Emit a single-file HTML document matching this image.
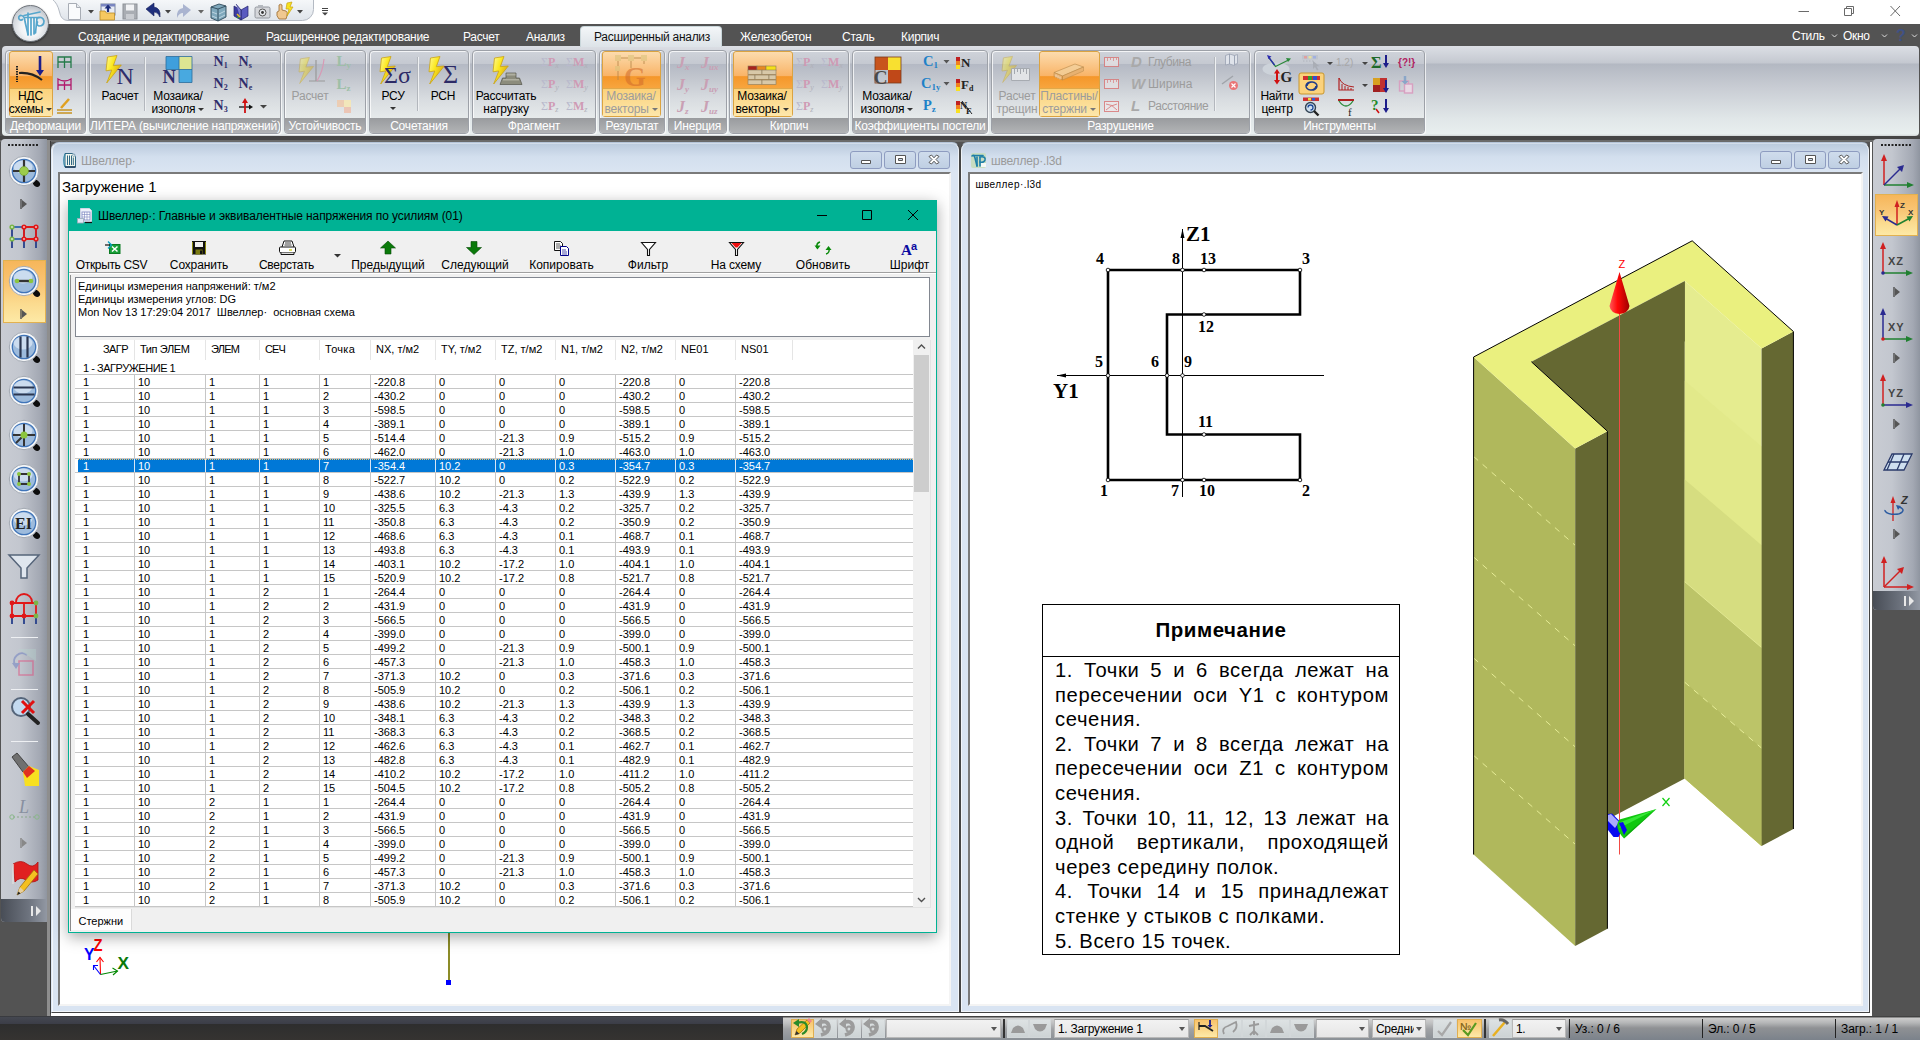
<!DOCTYPE html><html lang="ru"><head><meta charset="utf-8"><title>LIRA</title><style>
*{box-sizing:border-box}
html,body{margin:0;padding:0}
body{width:1920px;height:1040px;overflow:hidden;background:#535353;position:relative;font-family:"Liberation Sans",sans-serif;font-size:12px;color:#000}
.a{position:absolute}
.t{position:absolute;white-space:nowrap;line-height:1}
.tab{position:absolute;top:31px;color:#fff;font-size:12px;white-space:nowrap;line-height:1;letter-spacing:-.28px}
.grp{position:absolute;top:49.500px;height:84.500px;border:1px solid #9da1a8;border-radius:4px;background:linear-gradient(#cfd3da 0,#c5c9d1 12.500px,#b4b9c4 13px,#c1c5cd 26px,#d8dce0 48px,#e6eaeb 67px);overflow:hidden;box-shadow:inset 1px 1px 0 rgba(255,255,255,.75),1px 1px 0 rgba(255,255,255,.7)}
.grp .lb{position:absolute;left:0;right:0;bottom:0;height:15px;background:linear-gradient(#999b9e,#b2b4b6);color:#fff;font-size:12px;text-align:center;line-height:17px;white-space:nowrap;letter-spacing:-.2px;overflow:hidden}
.rl{position:absolute;font-size:12px;line-height:13px;text-align:center;white-space:nowrap;color:#000;letter-spacing:-.2px}
.dda{display:inline-block;width:0;height:0;border-left:3px solid transparent;border-right:3px solid transparent;border-top:3px solid #333;margin-left:3px;vertical-align:2px}
.dis{color:#9c9c9c}
.hot{position:absolute;border:1px solid #dba341;border-radius:3px;background:linear-gradient(#fcdcae 0,#f9b468 37%,#f5972a 38.500%,#f7a53e 56%,#f9c064 57%,#fde8a6 100%)}
.row{position:absolute;left:75px;width:838px;height:14px;border-top:1px solid #c6c6c6;font-size:11px;line-height:13px;white-space:nowrap}
.row span{position:absolute;top:.8px}
.vl{position:absolute;top:375px;width:1px;height:531px;background:#c6c6c6}
.hd{position:absolute;top:343px;font-size:11px;line-height:12px;white-space:nowrap}
.tbtn{position:absolute;top:258px;font-size:12px;line-height:14px;white-space:nowrap;text-align:center}
.sv{position:absolute;overflow:visible}
</style></head><body>
<!-- s_head -->
<div class="a" style="left:0;top:0;width:1920px;height:24px;background:#fff"></div><div class="a" style="left:0;top:24px;width:1920px;height:23px;background:#535353"></div><div class="a" style="left:0;top:46px;width:1920px;height:90px;background:#535353"></div><div class="a" style="left:2px;top:46px;width:1917px;height:90px;border-radius:4px;background:linear-gradient(#dcdfe5 0,#c4c8d0 17px,#b3b8c2 18px,#c9cdd4 42px,#e0e6e8 72px,#e8efef 88px,#d0d4d6 90px)"></div><div class="a" style="left:0;top:136px;width:1920px;height:4px;background:#454545"></div><div class="a" style="left:0;top:140px;width:1920px;height:2px;background:#6a6a6a"></div><svg class="sv" style="left:50px;top:0" width="270" height="24" viewBox="50 0 270 24"><linearGradient id="qg" x1="0" x2="0" y1="0" y2="1"><stop offset="0" stop-color="#f6f8fa"/><stop offset="1" stop-color="#dfe4ea"/></linearGradient><path d="M52 -1Q57.500 3 59.500 12Q61 20.500 68 20.500H302.500A11 11 0 0 0 313.500 9.500V-1Z" fill="url(#qg)" stroke="#b4bac3" stroke-width="1"/></svg><svg class="a" style="left:1780px;top:0" width="140" height="24" viewBox="0 0 140 24"><g stroke="#6a6a6a" stroke-width="1" fill="none"><path d="M18.500 11.500h10.500"/><path d="M64.500 8.500h7v7h-7z M66.500 8.500v-2h7v7h-2"/><path d="M110.500 6l9.500 10M120 6l-9.500 10"/></g></svg><div class="tab" style="left:78px">Создание и редактирование</div><div class="tab" style="left:266px">Расширенное редактирование</div><div class="tab" style="left:463px">Расчет</div><div class="tab" style="left:526px">Анализ</div><div class="tab" style="left:740px">Железобетон</div><div class="tab" style="left:842px">Сталь</div><div class="tab" style="left:901px">Кирпич</div><div class="a" style="left:580px;top:26px;width:142px;height:21px;border:1px solid #c9d6da;border-bottom:none;border-radius:4px 4px 0 0;background:linear-gradient(#f3f6f8,#dde3e8)"></div><div class="tab" style="left:594px;color:#111">Расширенный анализ</div><div class="tab" style="left:1792px;top:29.500px">Стиль</div><div class="tab" style="left:1843px;top:29.500px">Окно</div>
<!-- s_qat -->
<div class="a" style="left:12px;top:5px;width:37px;height:37px;border-radius:50%;background:radial-gradient(circle at 50% 62%,#ffffff 0,#f1f3f5 35%,#d4d8dd 62%,#b4bac2 82%,#e8eaee 100%);box-shadow:0 1px 2px rgba(0,0,0,.5);border:1px solid #6e737a"></div><svg class="sv" style="left:12px;top:5px" width="37" height="37" viewBox="12 5 37 37"><g fill="none" stroke="#56a6cc" stroke-width="1.700" stroke-linecap="round" stroke-linejoin="round"><path d="M22.500 19.500a2.300 2.300 0 1 1 -1-4q3 .5 3.500 6l3 13"/><path d="M24 15.500l16-3.500M25 17.500h14"/><path d="M28 13v22M31 18v17M34 18v16M37 18l-1.500 15"/><path d="M37 18q6-2 7 3q0 5-5 5q-3-1-1.500-4"/></g></svg><svg class="sv" style="left:55px;top:0" width="290" height="24" viewBox="55 0 290 24"><path d="M68.500 3.500h8l4 4v12h-12z" fill="#fafbfc" stroke="#a8adb5" stroke-width="1"/><path d="M76.500 3.500v4h4" fill="#e6e9ed" stroke="#a8adb5" stroke-width="1"/><path d="M88 10l3 3.500l3-3.500z" fill="#444"/><rect x="101" y="4" width="14" height="11" fill="#e8ecf4" stroke="#7a86a0" stroke-width="1"/><rect x="101" y="4" width="14" height="2.500" fill="#7a86c0"/><path d="M100 20V11h5l1.500 2h8v7z" fill="#f6c860" stroke="#b88a28" stroke-width=".800"/><path d="M108 12V7" stroke="#1d2d7a" stroke-width="2.200"/><path d="M104.500 8.500l3.500-4l3.500 4z" fill="#1d2d7a"/><rect x="123" y="4" width="14" height="15" fill="#a9adb3" stroke="#8e9298" stroke-width="1"/><rect x="126" y="4.500" width="8" height="6" fill="#f2f3f5"/><rect x="126" y="14" width="8" height="5" fill="#c9ccd1"/><path d="M146 9l8-6v4q7 1 6 10q-2-5-6-5v4z" fill="#1f2f7c" stroke="#16205a" stroke-width=".600"/><path d="M165 10l3 3.500l3-3.500z" fill="#444"/><path d="M191 10l-8-6v4q-7 1-6 10q2-5 6-5v4z" fill="#aab4d0"/><path d="M198 10l3 3.500l3-3.500z" fill="#666"/><path d="M211 7l8-3l7 2v11l-8 4l-7-3z" fill="#7fa8bc" stroke="#2f4a5a" stroke-width=".900"/><path d="M211 7l7 2l8-3M218 9v12" stroke="#2f4a5a" stroke-width=".900" fill="none"/><path d="M212 12l5 2M212 16l5 2M219 14l6-3M219 18l6-3" stroke="#d8e8f0" stroke-width=".700"/><path d="M234 6l7 4v10l-7-4z" fill="#3a3aa0" stroke="#22226a" stroke-width=".700"/><path d="M248 6l-7 4v10l7-4z" fill="#5a5ac0" stroke="#22226a" stroke-width=".700"/><path d="M236 4l5 6v10" stroke="#22226a" stroke-width=".700" fill="#7a7ad0"/><path d="M237 14l3 3" stroke="#e8c020" stroke-width="1.500"/><path d="M237 17l2 1" stroke="#30a030" stroke-width="1.300"/><rect x="255" y="7" width="15" height="11" rx="1.500" fill="#d4d6da" stroke="#8a8e96" stroke-width=".900"/><rect x="258" y="5" width="5" height="2.500" fill="#b4b8be"/><circle cx="262.500" cy="12.500" r="3.500" fill="#e8eaee" stroke="#555" stroke-width="1"/><circle cx="262.500" cy="12.500" r="1.400" fill="#333"/><path d="M279 19q-3-3-2-7l2-1v-6q1.500-1.500 3 0v5l4 1q2 1 1 5l-1 3z" fill="#f0c890" stroke="#9a6a30" stroke-width=".800"/><path d="M287 3l5-1l-2 5l3 0l-6 9l2-7l-3 0z" fill="#f7e21c" stroke="#c9a215" stroke-width=".700"/><path d="M297 10l3 3.500l3-3.500z" fill="#444"/><path d="M322 8.500h6M322 10.500h6" stroke="#444" stroke-width="1"/><path d="M322 12.500l3 3l3-3z" fill="#444"/></svg><svg class="sv" style="left:1820px;top:24px" width="100" height="22" viewBox="1820 24 100 22"><g fill="none" stroke="#ddd" stroke-width="1"><path d="M1832 34.500l2.500 2.500l2.500-2.500M1882 34.500l2.500 2.500l2.500-2.500M1912 34.500l2.500 2.500l2.500-2.500"/></g><text x="1896" y="41" font-size="16" font-weight="bold" fill="#3f5185" font-family="Liberation Sans,sans-serif">?</text></svg>
<!-- s_ribbon -->
<div class="grp" style="left:5px;width:81px"><div class="lb">Деформации</div></div><div class="grp" style="left:89px;width:192px"><div class="lb">ЛИТЕРА (вычисление напряжений)</div></div><div class="grp" style="left:284px;width:82px"><div class="lb">Устойчивость</div></div><div class="grp" style="left:369px;width:100px"><div class="lb">Сочетания</div></div><div class="grp" style="left:472px;width:124px"><div class="lb">Фрагмент</div></div><div class="grp" style="left:599px;width:66px"><div class="lb">Результат</div></div><div class="grp" style="left:668px;width:59px"><div class="lb">Инерция</div></div><div class="grp" style="left:729px;width:120px"><div class="lb">Кирпич</div></div><div class="grp" style="left:852px;width:136px"><div class="lb">Коэффициенты постели</div></div><div class="grp" style="left:991px;width:259px"><div class="lb">Разрушение</div></div><div class="grp" style="left:1254px;width:171px"><div class="lb">Инструменты</div></div><div class="hot" style="left:9px;top:51px;width:44px;height:66px"></div><div class="a" style="left:10px;top:88px;width:42px;height:1px;background:#e0a84a"></div><div class="a" style="left:10px;top:89px;width:42px;height:27px;background:linear-gradient(#fbd27c,#fde7ab)"></div><div class="hot" style="left:602px;top:51px;width:59px;height:66px"></div><div class="a" style="left:603px;top:88px;width:57px;height:1px;background:#e0a84a"></div><div class="a" style="left:603px;top:89px;width:57px;height:27px;background:linear-gradient(#fbd27c,#fde7ab)"></div><div class="hot" style="left:733px;top:51px;width:60px;height:66px"></div><div class="a" style="left:734px;top:88px;width:58px;height:1px;background:#e0a84a"></div><div class="a" style="left:734px;top:89px;width:58px;height:27px;background:linear-gradient(#fbd27c,#fde7ab)"></div><div class="hot" style="left:1039px;top:51px;width:61px;height:66px"></div><div class="a" style="left:1040px;top:88px;width:59px;height:1px;background:#e0a84a"></div><div class="a" style="left:1040px;top:89px;width:59px;height:27px;background:linear-gradient(#fbd27c,#fde7ab)"></div><div class="rl " style="left:-19.5px;width:100px;top:90px">НДС<br>схемы<span class="dda"></span></div><div class="rl " style="left:70px;width:100px;top:90px">Расчет</div><div class="rl " style="left:128px;width:100px;top:90px">Мозаика/<br>изополя<span class="dda"></span></div><div class="rl dis" style="left:260px;width:100px;top:90px">Расчет</div><div class="rl " style="left:343px;width:100px;top:90px">РСУ</div><div class="a" style="left:390px;top:107px;width:0;height:0;border-left:3px solid transparent;border-right:3px solid transparent;border-top:3px solid #333"></div><div class="rl " style="left:393px;width:100px;top:90px">РСН</div><div class="rl " style="left:456px;width:100px;top:90px">Рассчитать<br>нагрузку</div><div class="rl dis" style="left:581px;width:100px;top:90px">Мозаика/<br>векторы<span class="dda" style="border-top-color:#777"></span></div><div class="rl " style="left:712px;width:100px;top:90px">Мозаика/<br>векторы<span class="dda"></span></div><div class="rl " style="left:837px;width:100px;top:90px">Мозаика/<br>изополя<span class="dda"></span></div><div class="rl dis" style="left:967px;width:100px;top:90px">Расчет<br>трещин</div><div class="rl dis" style="left:1019px;width:100px;top:90px">Пластины/<br>стержни<span class="dda" style="border-top-color:#777"></span></div><div class="rl " style="left:1227px;width:100px;top:90px">Найти<br>центр</div><div class="t dis" style="left:1148px;top:56px;font-size:12px;letter-spacing:-0.4px">Глубина</div><div class="t" style="left:1131px;top:54px;font-size:15px;font-style:italic;font-weight:bold;color:#a9a9a9">D</div><div class="t dis" style="left:1148px;top:78px;font-size:12px;letter-spacing:0px">Ширина</div><div class="t" style="left:1131px;top:76px;font-size:15px;font-style:italic;font-weight:bold;color:#a9a9a9">W</div><div class="t dis" style="left:1148px;top:100px;font-size:12px;letter-spacing:-0.45px">Расстояние</div><div class="t" style="left:1131px;top:98px;font-size:15px;font-style:italic;font-weight:bold;color:#a9a9a9">L</div><div class="a" style="left:144px;top:57px;width:1px;height:54px;background:#b3b7bd"></div><div class="a" style="left:145px;top:57px;width:1px;height:54px;background:#eef0f2"></div><div class="a" style="left:417px;top:57px;width:1px;height:54px;background:#b3b7bd"></div><div class="a" style="left:418px;top:57px;width:1px;height:54px;background:#eef0f2"></div><div class="a" style="left:1214px;top:57px;width:1px;height:54px;background:#b3b7bd"></div><div class="a" style="left:1215px;top:57px;width:1px;height:54px;background:#eef0f2"></div><svg class="sv" style="left:0;top:46px" width="1440" height="90" viewBox="0 46 1440 90"><linearGradient id="bg" x1="0" y1="0" x2="1" y2=".6"><stop offset="0" stop-color="#fffb9a"/><stop offset=".45" stop-color="#fbe821"/><stop offset="1" stop-color="#d9a60c"/></linearGradient><g fill="none"><path d="M17 66v16" stroke="#222" stroke-width="2" stroke-dasharray="1.500 1"/><path d="M19 73q13-1 23 7" stroke="#222" stroke-width="2.200"/><path d="M40 56v17" stroke="#1d1d8a" stroke-width="2.600"/><path d="M36 70l4 6l4-6z" fill="#1d1d8a"/></g><g fill="none" stroke-width="1.300"><path d="M58 68V57h13v11M64.500 57v11M58 62h13" stroke="#257a4a"/><path d="M58 90V79q6.500 4 13 0v11M64.500 82v8M58 85h13" stroke="#b1186b"/><path d="M57 110h15M57 113h15" stroke="#c89422"/><path d="M61 108l8-9" stroke="#e0a020" stroke-width="2.500"/></g><polygon points="107.5,57.0 117.0,55.5 113.3,65.7 121.3,65.0 106.7,83.0 111.8,70.0 106.0,70.8" fill="url(#bg)" stroke="#c9a215" stroke-width=".800" opacity="1.0"/><text x="116.5" y="83.5" font-size="24" font-weight="normal" fill="#2f2d6b" opacity="1" font-family="Liberation Serif,serif" >N</text><rect x="166" y="56.500" width="13" height="13" fill="#3f9fdc"/><rect x="179" y="56.500" width="13" height="13" fill="#dde592"/><rect x="179" y="69.500" width="13" height="13" fill="#48a9e0"/><path d="M166 56.500h26v26h-13v-13h-13z" fill="none" stroke="#2b6c9c" stroke-width=".800"/><path d="M179 56.500v13h13" fill="none" stroke="#2b6c9c" stroke-width=".800"/><text x="162.5" y="83" font-size="18.5" font-weight="bold" fill="#2f2d6b" opacity="1" font-family="Liberation Serif,serif" >N</text><text x="213.5" y="66" font-size="14" font-weight="bold" fill="#2f2d6b" opacity="1" font-family="Liberation Serif,serif" >N<tspan font-size="8" dy="2">1</tspan></text><text x="238.5" y="66" font-size="14" font-weight="bold" fill="#2f2d6b" opacity="1" font-family="Liberation Serif,serif" >N<tspan font-size="8" dy="2">s</tspan></text><text x="213.5" y="88" font-size="14" font-weight="bold" fill="#2f2d6b" opacity="1" font-family="Liberation Serif,serif" >N<tspan font-size="8" dy="2">2</tspan></text><text x="238.5" y="88" font-size="14" font-weight="bold" fill="#2f2d6b" opacity="1" font-family="Liberation Serif,serif" >N<tspan font-size="8" dy="2">e</tspan></text><text x="213.5" y="110" font-size="14" font-weight="bold" fill="#2f2d6b" opacity="1" font-family="Liberation Serif,serif" >N<tspan font-size="8" dy="2">3</tspan></text><path d="M239 107h12" stroke="#111" stroke-width="1.300" fill="none"/><path d="M249 104.500l4 2.500l-4 2.500z" fill="#111"/><path d="M245 113v-12" stroke="#d01010" stroke-width="1.800"/><path d="M242 103l3-5l3 5z" fill="#d01010"/><path d="M260 105l3.500 3.500l3.500-3.500z" fill="#444"/><polygon points="300.4,58.9 309.4,57.4 305.9,67.1 313.5,66.5 299.7,83.5 304.5,71.2 299.0,72.0" fill="url(#bg)" stroke="#c9a215" stroke-width=".800" opacity="0.45"/><path d="M316 60v21M309 81h16" stroke="#999" stroke-width="1.200" fill="none"/><path d="M317 81q6-10 7-22" stroke="#d79ab5" stroke-width="1.200" fill="none"/><text x="336.5" y="66" font-size="15" font-weight="bold" fill="#9dbfa6" opacity="1" font-family="Liberation Serif,serif" >L<tspan font-size="9" dy="2">y</tspan></text><text x="336.5" y="89" font-size="15" font-weight="bold" fill="#9dbfa6" opacity="1" font-family="Liberation Serif,serif" >L<tspan font-size="9" dy="2">z</tspan></text><rect x="337" y="100" width="7" height="7" fill="#f0c8a8" opacity=".8"/><rect x="344" y="100" width="7" height="7" fill="#f8e8b0" opacity=".8"/><rect x="344" y="107" width="7" height="6" fill="#f0b8a0" opacity=".7"/><polygon points="381.5,58.0 391.0,56.5 387.3,66.7 395.3,66.0 380.7,84.0 385.8,71.0 380.0,71.8" fill="url(#bg)" stroke="#c9a215" stroke-width=".800" opacity="1.0"/><text x="384" y="83" font-size="24" font-weight="normal" fill="#2c2a66" opacity="1" font-family="Liberation Serif,serif" >Σσ</text><polygon points="430.5,58.0 440.0,56.5 436.3,66.7 444.3,66.0 429.7,84.0 434.8,71.0 429.0,71.8" fill="url(#bg)" stroke="#c9a215" stroke-width=".800" opacity="1.0"/><text x="443" y="83" font-size="26" font-weight="normal" fill="#2c2a66" opacity="1" font-family="Liberation Serif,serif" >Σ</text><polygon points="494.5,58.0 504.0,56.5 500.3,66.7 508.3,66.0 493.7,84.0 498.8,71.0 493.0,71.8" fill="url(#bg)" stroke="#c9a215" stroke-width=".800" opacity="1.0"/><path d="M500 84.500l2.500-6.500h3.500v-5h10v5h3.500l2.500 6.500z" fill="#8c8c7c" stroke="#55554a" stroke-width=".700"/><path d="M506.500 73.500h9v2h-9zM503 79h16v1.500h-16z" fill="#b8b8aa" opacity=".8"/><text x="541" y="66" font-size="12" fill="#b9b9cc" font-family="Liberation Serif,serif">Σ<tspan fill="#cf9ab4" font-weight="bold">P</tspan><tspan font-size="8" dy="2" font-style="italic" fill="#b0b0b8">x</tspan></text><text x="566" y="66" font-size="12" fill="#b9b9cc" font-family="Liberation Serif,serif">Σ<tspan fill="#cf9ab4" font-weight="bold">M</tspan><tspan font-size="8" dy="2" font-style="italic" fill="#b0b0b8">x</tspan></text><text x="541" y="88" font-size="12" fill="#b9b9cc" font-family="Liberation Serif,serif">Σ<tspan fill="#cf9ab4" font-weight="bold">P</tspan><tspan font-size="8" dy="2" font-style="italic" fill="#b0b0b8">y</tspan></text><text x="566" y="88" font-size="12" fill="#b9b9cc" font-family="Liberation Serif,serif">Σ<tspan fill="#cf9ab4" font-weight="bold">M</tspan><tspan font-size="8" dy="2" font-style="italic" fill="#b0b0b8">y</tspan></text><text x="541" y="110" font-size="12" fill="#b9b9cc" font-family="Liberation Serif,serif">Σ<tspan fill="#cf9ab4" font-weight="bold">P</tspan><tspan font-size="8" dy="2" font-style="italic" fill="#b0b0b8">z</tspan></text><text x="566" y="110" font-size="12" fill="#b9b9cc" font-family="Liberation Serif,serif">Σ<tspan fill="#cf9ab4" font-weight="bold">M</tspan><tspan font-size="8" dy="2" font-style="italic" fill="#b0b0b8">z</tspan></text><g opacity=".55"><path d="M618 58h26M618 58v22M631 58v10M644 58v6" stroke="#b8864a" stroke-width="1.500" fill="none"/><rect x="615" y="55" width="6" height="6" fill="#d9c27a"/><rect x="628" y="55" width="6" height="6" fill="#d9c27a"/><rect x="641" y="55" width="6" height="6" fill="#d9c27a"/><rect x="615" y="66" width="5" height="5" fill="#d9c27a"/><text x="624" y="86" font-size="28" font-weight="bold" fill="#d06a2a" opacity="1" font-family="Liberation Serif,serif" >G</text></g><text x="677" y="68" font-size="16" font-style="italic" font-weight="bold" fill="#c9a0b4" font-family="Liberation Serif,serif">J<tspan font-size="9" dy="2">x</tspan></text><text x="701" y="68" font-size="16" font-style="italic" font-weight="bold" fill="#c9a0b4" font-family="Liberation Serif,serif">J<tspan font-size="9" dy="2">ux</tspan></text><text x="677" y="90" font-size="16" font-style="italic" font-weight="bold" fill="#c9a0b4" font-family="Liberation Serif,serif">J<tspan font-size="9" dy="2">y</tspan></text><text x="701" y="90" font-size="16" font-style="italic" font-weight="bold" fill="#c9a0b4" font-family="Liberation Serif,serif">J<tspan font-size="9" dy="2">uy</tspan></text><text x="677" y="112" font-size="16" font-style="italic" font-weight="bold" fill="#c9a0b4" font-family="Liberation Serif,serif">J<tspan font-size="9" dy="2">z</tspan></text><text x="701" y="112" font-size="16" font-style="italic" font-weight="bold" fill="#c9a0b4" font-family="Liberation Serif,serif">J<tspan font-size="9" dy="2">uz</tspan></text><g stroke="#8a7a5a" stroke-width=".600"><rect x="748" y="66" width="9" height="4.500" fill="#a8231c"/><rect x="757" y="66" width="9" height="4.500" fill="#e88820"/><rect x="766" y="66" width="10" height="4.500" fill="#f5e018"/><rect x="748" y="70" width="14" height="4.500" fill="#d8c8a8"/><rect x="762" y="70" width="14" height="4.500" fill="#d8c8a8"/><rect x="748" y="75" width="7" height="4.500" fill="#d8c8a8"/><rect x="755" y="75" width="14" height="4.500" fill="#d8c8a8"/><rect x="769" y="75" width="7" height="4.500" fill="#d8c8a8"/><rect x="748" y="80" width="14" height="4.500" fill="#d8c8a8"/><rect x="762" y="80" width="14" height="4.500" fill="#d8c8a8"/></g><text x="796" y="66" font-size="12" fill="#b9b9cc" font-family="Liberation Serif,serif">Σ<tspan fill="#cf9ab4" font-weight="bold">P</tspan><tspan font-size="8" dy="2" font-style="italic" fill="#b0b0b8">x</tspan></text><text x="821" y="66" font-size="12" fill="#b9b9cc" font-family="Liberation Serif,serif">Σ<tspan fill="#cf9ab4" font-weight="bold">M</tspan><tspan font-size="8" dy="2" font-style="italic" fill="#b0b0b8">x</tspan></text><text x="796" y="88" font-size="12" fill="#b9b9cc" font-family="Liberation Serif,serif">Σ<tspan fill="#cf9ab4" font-weight="bold">P</tspan><tspan font-size="8" dy="2" font-style="italic" fill="#b0b0b8">y</tspan></text><text x="821" y="88" font-size="12" fill="#b9b9cc" font-family="Liberation Serif,serif">Σ<tspan fill="#cf9ab4" font-weight="bold">M</tspan><tspan font-size="8" dy="2" font-style="italic" fill="#b0b0b8">y</tspan></text><text x="796" y="110" font-size="12" fill="#b9b9cc" font-family="Liberation Serif,serif">Σ<tspan fill="#cf9ab4" font-weight="bold">P</tspan><tspan font-size="8" dy="2" font-style="italic" fill="#b0b0b8">z</tspan></text><rect x="875" y="57" width="13" height="13" fill="#c8541c"/><rect x="888" y="57" width="13" height="13" fill="#f8e030"/><rect x="888" y="70" width="13" height="13" fill="#c04818"/><rect x="875" y="57" width="26" height="26" fill="none" stroke="#7a3a1a" stroke-width=".800"/><text x="873.5" y="83.5" font-size="19.5" font-weight="bold" fill="#4a4a4a" opacity="1" font-family="Liberation Serif,serif" >C</text><text x="923" y="66" font-size="14.5" font-weight="bold" fill="#1e82c8" opacity="1" font-family="Liberation Serif,serif" >C<tspan font-size="9" dy="2">1</tspan></text><text x="921" y="88" font-size="14.5" font-weight="bold" fill="#1e82c8" opacity="1" font-family="Liberation Serif,serif" >C<tspan font-size="9" dy="2">1y</tspan></text><text x="923" y="110" font-size="14.5" font-weight="bold" fill="#1e82c8" opacity="1" font-family="Liberation Serif,serif" >P<tspan font-size="9" dy="2">z</tspan></text><path d="M943.500 60h6l-3 3.500zM943.500 82h6l-3 3.500z" fill="#555"/><rect x="956" y="57" width="4" height="4" fill="#c02020"/><rect x="956" y="61" width="4" height="4" fill="#f08020"/><rect x="956" y="65" width="4" height="4" fill="#f8e020"/><rect x="956" y="79" width="4" height="4" fill="#c02020"/><rect x="956" y="83" width="4" height="4" fill="#f08020"/><rect x="956" y="87" width="4" height="4" fill="#f8e020"/><rect x="956" y="101" width="4" height="4" fill="#c02020"/><rect x="956" y="105" width="4" height="4" fill="#f08020"/><rect x="956" y="109" width="4" height="4" fill="#f8e020"/><text x="961" y="67" font-size="13" font-weight="bold" fill="#222" opacity="1" font-family="Liberation Serif,serif" >N</text><text x="961" y="89" font-size="13" font-weight="bold" fill="#222" opacity="1" font-family="Liberation Serif,serif" >F<tspan font-size="8" dy="2">d</tspan></text><text x="960" y="109" font-size="10" font-weight="bold" fill="#222" opacity="1" font-family="Liberation Serif,serif" >N</text><text x="966" y="114" font-size="9" font-weight="bold" fill="#222" opacity="1" font-family="Liberation Serif,serif" >F</text><path d="M962 101l10 13" stroke="#222" stroke-width="1"/><polygon points="1003.4,57.9 1012.5,56.4 1008.9,66.1 1016.5,65.5 1002.7,82.5 1007.5,70.2 1002.0,71.0" fill="url(#bg)" stroke="#c9a215" stroke-width=".800" opacity="0.45"/><path d="M1011.500 80.500V68.500h18v12z" fill="#e6e8ea" stroke="#a4a8ae" stroke-width="1" opacity=".9"/><path d="M1014.500 69v5M1017.500 69v3M1020.500 69v5M1023.500 69v3M1026.500 69v5" stroke="#a4a8ae" stroke-width="1"/><path d="M1054 72.500l21-8.500l8.500 3l-21 9z" fill="#f3cf9a" stroke="#b98a4a" stroke-width=".700" opacity=".85"/><path d="M1054 72.500v4l8.500 3.500v-4zM1062.500 76v4l21-9v-4z" fill="#e6b070" stroke="#b98a4a" stroke-width=".600" opacity=".85"/><path d="M1056 74.500v3M1058 75.500v3M1060 76.500v3" stroke="#fff" stroke-width=".700" opacity=".8"/><rect x="1104.500" y="57.5" width="14" height="9" fill="#e4e0e2" stroke="#d97a7a" stroke-width="1" opacity=".85"/><path d="M1107.500 58v3M1110.500 58v2M1113.500 58v3M1116.500 58v2" stroke="#d97a7a" stroke-width=".800" opacity=".85"/><rect x="1104.500" y="79.5" width="14" height="9" fill="#e4e0e2" stroke="#d97a7a" stroke-width="1" opacity=".85"/><path d="M1107.500 80v3M1110.500 80v2M1113.500 80v3M1116.500 80v2" stroke="#d97a7a" stroke-width=".800" opacity=".85"/><rect x="1104.500" y="101.500" width="14" height="10" fill="#ece8ea" stroke="#d97a7a" stroke-width="1" opacity=".85"/><path d="M1106 104q6 0 11 6M1117 104q-6 1-11 6" stroke="#d97a7a" stroke-width="1" fill="none" opacity=".85"/><path d="M1225.500 55.500l4-1.500v10l-4 1zM1229.500 54l5 1.500v10l-5-1.500zM1234.500 55.500l3-1v9l-3 1z" fill="#dfe3ea" stroke="#9aa2b2" stroke-width=".800"/><circle cx="1233.500" cy="85.500" r="4.500" fill="#e66" opacity=".85"/><path d="M1231.500 83.500l4 4M1235.500 83.500l-4 4" stroke="#fff" stroke-width="1.200"/><path d="M1222 84l11-8" stroke="#a0a4aa" stroke-width="1.500"/><ellipse cx="1276" cy="69" rx="13.500" ry="6.500" fill="#cdd3da"/><path d="M1268.500 57l7 9.500l14-7" stroke="#2b8a3a" stroke-width="1.300" fill="none"/><path d="M1268.500 57l6 8" stroke="#2a2ab0" stroke-width="1.300"/><path d="M1267 55l4.500 1.500l-3 2.500z" fill="#2a2ab0"/><path d="M1291 58.500l-5-.5l2 4z" fill="#2b8a3a"/><path d="M1277 71v11" stroke="#d01010" stroke-width="2"/><path d="M1274 73.500l3-4.500l3 4.500zM1274 80l3 4.500l3-4.500z" fill="#d01010"/><text x="1280.5" y="81.5" font-size="15" font-weight="bold" fill="#222" opacity="1" font-family="Liberation Serif,serif" >G</text><rect x="1302" y="55" width="16" height="4.500" fill="#bfc4cd"/><rect x="1304" y="56" width="3" height="2.500" fill="#e0a0a0"/><rect x="1308.500" y="56" width="3" height="2.500" fill="#e8e0a0"/><rect x="1313" y="56" width="3" height="2.500" fill="#a0b0e0"/><path d="M1303 61h12" stroke="#b0b4bc" stroke-dasharray="1.500 1.500"/><path d="M1313 61v8l2-2l2 3.500l1.500-.8l-2-3.500h3z" fill="#a9adb5"/><rect x="1299" y="73" width="25" height="21" rx="2" fill="#fbd27c" stroke="#c8962c" stroke-width="1"/><rect x="1303" y="76" width="17" height="4" fill="#d03030"/><rect x="1308" y="76" width="4" height="4" fill="#30a030"/><rect x="1313" y="76" width="4" height="4" fill="#3050d0"/><path d="M1307 86a5 4 0 1 1 4 4M1316 86a5 4 0 1 1-4-4" stroke="#1d3a8a" stroke-width="1.500" fill="none"/><rect x="1303" y="97.500" width="16" height="3.500" fill="#d03030"/><rect x="1308" y="98" width="3" height="2.500" fill="#e8e040"/><rect x="1312" y="98" width="3" height="2.500" fill="#3060d0"/><circle cx="1310.500" cy="107.500" r="5" fill="#cfe0f0" stroke="#345" stroke-width="1.400"/><path d="M1308 107.500a2.500 2.500 0 1 1 2.500 2.500" stroke="#1d4a9a" stroke-width="1.300" fill="none"/><path d="M1314 111l4.500 4.500" stroke="#222" stroke-width="2.400"/><text x="1336" y="66" font-size="10" fill="#a8a8a8" font-family="Liberation Sans,sans-serif">1.2)</text><path d="M1339 78v12h15" stroke="#b02020" stroke-width="1.200" fill="none"/><path d="M1339 78q3 8 15 9" stroke="#b02020" stroke-width="1" fill="none"/><path d="M1342 84v6M1345 86v4M1348 87v3M1351 88v2" stroke="#b02020" stroke-width="1"/><path d="M1338 100h16" stroke="#b02020" stroke-width="2"/><path d="M1339 101q7 10 14 0" stroke="#2a8a3a" stroke-width="1.300" fill="none"/><text x="1348" y="116" font-size="11" fill="#222" font-family="Liberation Serif,serif">f</text><path d="M1327 62l3 3l3-3zM1362 62l3 3l3-3zM1362 84l3 3l3-3z" fill="#444"/><text x="1371" y="68" font-size="16" font-weight="bold" fill="#1f6a2a" opacity="1" font-family="Liberation Serif,serif" >Σ</text><path d="M1386 55v10" stroke="#1d1d8a" stroke-width="2"/><path d="M1383 63l3 5l3-5z" fill="#1d1d8a"/><rect x="1373" y="78" width="7" height="7" fill="#d8a020"/><rect x="1373" y="85" width="7" height="7" fill="#a02020"/><rect x="1380" y="78" width="7" height="14" fill="#c03030"/><path d="M1386 80v10" stroke="#1d1d8a" stroke-width="2"/><path d="M1383 88l3 5l3-5z" fill="#1d1d8a"/><text x="1371" y="110" font-size="15" font-weight="bold" fill="#1f8a2a" opacity="1" font-family="Liberation Serif,serif" >?</text><path d="M1386 99v11" stroke="#1d1d8a" stroke-width="2"/><path d="M1383 108l3 5l3-5z" fill="#1d1d8a"/><path d="M1376 109l3 4" stroke="#d01010" stroke-width="1.500"/><text x="1398" y="66" font-size="10" font-weight="bold" fill="#b02060" font-family="Liberation Sans,sans-serif">{?!}</text><rect x="1399.500" y="81" width="9" height="10" fill="none" stroke="#d8a0c0" stroke-width="1.400"/><rect x="1404.500" y="84" width="8" height="9" fill="#e8d8e4" stroke="#d8a0c0" stroke-width="1.400"/><path d="M1405 76v6" stroke="#8aa6c8" stroke-width="2.500"/><path d="M1401.500 81l3.500 3.500l3.500-3.500z" fill="#8aa6c8"/></svg>
<!-- s_mdi -->
<div class="a" style="left:1px;top:139px;width:46px;height:783px;border-radius:4px 0 0 4px;background:linear-gradient(90deg,#c9ccd3 0,#c3c7cf 40%,#a3a8b3 85%,#8f95a0 100%)"></div><div class="a" style="left:1px;top:899px;width:46px;height:23px;border-radius:0 0 4px 4px;background:linear-gradient(90deg,#484d56,#6d737e 60%,#9298a3)"></div><div class="a" style="left:3px;top:260px;width:43px;height:63px;border:1px solid #e2b150;background:linear-gradient(#f6b65a 0,#f9c676 40%,#fbdb8f 70%,#fde9a6 100%)"></div><div class="a" style="left:1873px;top:139px;width:47px;height:471px;border-radius:4px 0 0 4px;background:linear-gradient(90deg,#c9ccd3 0,#c3c7cf 40%,#a3a8b3 85%,#8f95a0 100%)"></div><div class="a" style="left:1873px;top:591px;width:47px;height:19px;border-radius:0 0 0 4px;background:linear-gradient(90deg,#484d56,#6d737e 60%,#9298a3)"></div><div class="a" style="left:1875px;top:194px;width:43px;height:42px;border:1px solid #e2b150;background:linear-gradient(#f6b65a 0,#f9c676 40%,#fbdb8f 70%,#fde9a6 100%)"></div><div class="a" style="left:47px;top:140px;width:2.500px;height:876px;background:#8e8e8e"></div><div class="a" style="left:49.500px;top:141px;width:1.500px;height:873px;background:#3c3c3c"></div><div class="a" style="left:51px;top:142px;width:909px;height:871px;border:1px solid #454545;border-top-color:#b4c4d8;border-left-color:#dce6f3;border-radius:8px 8px 0 0;background:linear-gradient(#b9c9dc 0,#d3dfee 14px,#dbe5f2 30px,#d9e4f2 100%)"><div class="a" style="left:0;top:0;right:0;bottom:0;border:1px solid rgba(255,255,255,.65);border-top-color:rgba(255,255,255,.35);border-radius:7px 7px 0 0"></div><div class="a" style="left:6px;top:29px;right:8px;bottom:6px;border:2px solid #7a7a7a;border-right-color:#f4f4f4;border-bottom-color:#f4f4f4;background:#fff"></div><div class="t" style="left:29px;top:12px;font-size:12px;color:#9a9a9a">Швеллер·</div><div class="a" style="left:798px;top:8px;width:32px;height:18px;border:1px solid #8e9cc0;border-radius:3px;background:linear-gradient(#cfdcec,#bfcfe3)"></div><div class="a" style="left:832px;top:8px;width:32px;height:18px;border:1px solid #8e9cc0;border-radius:3px;background:linear-gradient(#cfdcec,#bfcfe3)"></div><div class="a" style="left:866px;top:8px;width:32px;height:18px;border:1px solid #8e9cc0;border-radius:3px;background:linear-gradient(#cfdcec,#bfcfe3)"></div><svg class="sv" style="left:798px;top:8px" width="100" height="18" viewBox="0 0 100 18"><g fill="#fff" stroke="#555" stroke-width="1"><path d="M11.500 9.500h9v3h-9z"/><path d="M45.500 4.500h10v8h-10zM48.500 7.500h4v2h-4z" fill-rule="evenodd"/><path d="M79 5.500l2.500-1.500l2.500 2.800l2.500-2.800l2.500 1.500l-3 3l3 3l-2.500 1.500l-2.500-2.800l-2.500 2.800l-2.500-1.500l3-3z"/></g></svg><svg class="sv" style="left:9px;top:8px" width="18" height="18" viewBox="0 0 18 18"><path d="M4 2.500h7.500l3 3v10.500h-10.500z" fill="#f2f7ee" stroke="#2f6784" stroke-width="1"/><path d="M6.500 4.500v9.500M8.500 4.500v9.500M10.500 4.500v9.500M12.300 6.500v7.500" stroke="#2f6784" stroke-width="1"/><path d="M4 3q-2.500 6.500 0 13" stroke="#3a8aa8" stroke-width="1.300" fill="none"/><path d="M4 16h10.500" stroke="#1a3a5a" stroke-width="1.600"/><circle cx="12.800" cy="4.200" r="1.200" fill="#fff" stroke="#2f6784" stroke-width=".600"/></svg></div><div class="a" style="left:960px;top:142px;width:910px;height:871px;border:1px solid #454545;border-top-color:#b4c4d8;border-left-color:#454545;border-radius:8px 8px 0 0;background:linear-gradient(#b9c9dc 0,#d3dfee 14px,#dbe5f2 30px,#d9e4f2 100%)"><div class="a" style="left:0;top:0;right:0;bottom:0;border:1px solid rgba(255,255,255,.65);border-top-color:rgba(255,255,255,.35);border-radius:7px 7px 0 0"></div><div class="a" style="left:7px;top:29px;right:6px;bottom:6px;border:2px solid #7a7a7a;border-right-color:#f4f4f4;border-bottom-color:#f4f4f4;background:#fff"></div><div class="t" style="left:30px;top:12px;font-size:12px;color:#9a9a9a"><span style="letter-spacing:-.18px">швеллер·.l3d</span></div><div class="a" style="left:799px;top:8px;width:32px;height:18px;border:1px solid #8e9cc0;border-radius:3px;background:linear-gradient(#cfdcec,#bfcfe3)"></div><div class="a" style="left:833px;top:8px;width:32px;height:18px;border:1px solid #8e9cc0;border-radius:3px;background:linear-gradient(#cfdcec,#bfcfe3)"></div><div class="a" style="left:867px;top:8px;width:32px;height:18px;border:1px solid #8e9cc0;border-radius:3px;background:linear-gradient(#cfdcec,#bfcfe3)"></div><svg class="sv" style="left:799px;top:8px" width="100" height="18" viewBox="0 0 100 18"><g fill="#fff" stroke="#555" stroke-width="1"><path d="M11.500 9.500h9v3h-9z"/><path d="M45.500 4.500h10v8h-10zM48.500 7.500h4v2h-4z" fill-rule="evenodd"/><path d="M79 5.500l2.500-1.500l2.500 2.800l2.500-2.800l2.500 1.500l-3 3l3 3l-2.500 1.500l-2.500-2.800l-2.500 2.800l-2.500-1.500l3-3z"/></g></svg><svg class="sv" style="left:9px;top:8px" width="18" height="18" viewBox="0 0 18 18"><rect x="1" y="2" width="15" height="15" rx="2" fill="#c8dcc0"/><g fill="none" stroke="#1f7fa8" stroke-width="1.600" stroke-linecap="round"><path d="M2 5q2-2 3 2l2 8"/><path d="M4 4.500h9"/><path d="M7 6v9M10 6v9"/><path d="M10 6q6-1 5 3q-1 3-5 2"/></g><rect x="11" y="12" width="5" height="4" fill="#f4f8f4"/></svg></div><div class="a" style="left:1870px;top:142px;width:2px;height:874px;background:#fff"></div><div class="a" style="left:51px;top:1013px;width:1821px;height:3px;background:#fff"></div>
<!-- s_tools -->
<svg class="sv" style="left:0;top:136px" width="50" height="790" viewBox="0 136 50 790"><path d="M8 145h31" stroke="#222" stroke-width="2" stroke-dasharray="2 1.500"/><ellipse cx="36.4" cy="183.4" rx="4" ry="3" fill="#0c0c0c" transform="rotate(42 36.4 183.4)"/><circle cx="24" cy="171" r="14.700" fill="#f4f6f8" stroke="#9aa0aa" stroke-width=".900"/><circle cx="24" cy="171" r="11.700" fill="#9dbbdc" stroke="#3f74b8" stroke-width="1.300"/><ellipse cx="23" cy="167" rx="9.500" ry="6.500" fill="#dbe7f5" opacity=".75"/><path d="M13 171h22M24 160v22" stroke="#333" stroke-width="2.200"/><circle cx="24" cy="171" r="4.500" fill="#9ccc4c" stroke="#6a9a2c" stroke-width=".600"/><path d="M21 199v10" stroke="#555" stroke-width="1.500"/><path d="M22 200l5 4l-5 4z" fill="#555"/><g fill="none" stroke-width="1.800"><path d="M12 227v21M24 227v21M36 227v21" stroke="#27408b"/><path d="M12 227h12M12 239h12" stroke="#3f6fb0"/><path d="M24 227h12v12h-12z" stroke="#e01818"/></g><circle cx="12" cy="227" r="2.600" fill="#7ab648"/><circle cx="12" cy="227" r="1" fill="#fff" opacity=".7"/><circle cx="12" cy="239" r="2.600" fill="#7ab648"/><circle cx="12" cy="239" r="1" fill="#fff" opacity=".7"/><circle cx="24" cy="227" r="2.600" fill="#e01818"/><circle cx="24" cy="227" r="1" fill="#fff" opacity=".7"/><circle cx="36" cy="227" r="2.600" fill="#e01818"/><circle cx="36" cy="227" r="1" fill="#fff" opacity=".7"/><circle cx="24" cy="239" r="2.600" fill="#e01818"/><circle cx="24" cy="239" r="1" fill="#fff" opacity=".7"/><circle cx="36" cy="239" r="2.600" fill="#e01818"/><circle cx="36" cy="239" r="1" fill="#fff" opacity=".7"/><ellipse cx="36.4" cy="293.4" rx="4" ry="3" fill="#0c0c0c" transform="rotate(42 36.4 293.4)"/><circle cx="24" cy="281" r="14.700" fill="#f4f6f8" stroke="#9aa0aa" stroke-width=".900"/><circle cx="24" cy="281" r="11.700" fill="#9dbbdc" stroke="#3f74b8" stroke-width="1.300"/><ellipse cx="23" cy="277" rx="9.500" ry="6.500" fill="#dbe7f5" opacity=".75"/><path d="M17 281h14" stroke="#333" stroke-width="2.400"/><circle cx="17" cy="281" r="2.300" fill="#8cc63f"/><circle cx="31" cy="281" r="2.300" fill="#8cc63f"/><path d="M21 309v10" stroke="#555" stroke-width="1.500"/><path d="M22 310l5 4l-5 4z" fill="#555"/><ellipse cx="36.4" cy="359.4" rx="4" ry="3" fill="#0c0c0c" transform="rotate(42 36.4 359.4)"/><circle cx="24" cy="347" r="14.700" fill="#f4f6f8" stroke="#9aa0aa" stroke-width=".900"/><circle cx="24" cy="347" r="11.700" fill="#9dbbdc" stroke="#3f74b8" stroke-width="1.300"/><ellipse cx="23" cy="343" rx="9.500" ry="6.500" fill="#dbe7f5" opacity=".75"/><path d="M20.5 336.500v21M27.5 336.500v21" stroke="#2a3650" stroke-width="2.200"/><ellipse cx="36.4" cy="403.4" rx="4" ry="3" fill="#0c0c0c" transform="rotate(42 36.4 403.4)"/><circle cx="24" cy="391" r="14.700" fill="#f4f6f8" stroke="#9aa0aa" stroke-width=".900"/><circle cx="24" cy="391" r="11.700" fill="#9dbbdc" stroke="#3f74b8" stroke-width="1.300"/><ellipse cx="23" cy="387" rx="9.500" ry="6.500" fill="#dbe7f5" opacity=".75"/><path d="M13.5 387.500h21M13.5 394.500h21" stroke="#2a3650" stroke-width="2.200"/><ellipse cx="36.4" cy="447.4" rx="4" ry="3" fill="#0c0c0c" transform="rotate(42 36.4 447.4)"/><circle cx="24" cy="435" r="14.700" fill="#f4f6f8" stroke="#9aa0aa" stroke-width=".900"/><circle cx="24" cy="435" r="11.700" fill="#9dbbdc" stroke="#3f74b8" stroke-width="1.300"/><ellipse cx="23" cy="431" rx="9.500" ry="6.500" fill="#dbe7f5" opacity=".75"/><path d="M13 435h22M24 424v22M24 435l-8 8" stroke="#333" stroke-width="2"/><circle cx="24" cy="435" r="3.500" fill="#8cc63f"/><ellipse cx="36.4" cy="491.4" rx="4" ry="3" fill="#0c0c0c" transform="rotate(42 36.4 491.4)"/><circle cx="24" cy="479" r="14.700" fill="#f4f6f8" stroke="#9aa0aa" stroke-width=".900"/><circle cx="24" cy="479" r="11.700" fill="#9dbbdc" stroke="#3f74b8" stroke-width="1.300"/><ellipse cx="23" cy="475" rx="9.500" ry="6.500" fill="#dbe7f5" opacity=".75"/><path d="M19 474h10v10h-10z" stroke="#333" stroke-width="1.800" fill="none"/><circle cx="19" cy="474" r="2" fill="#8cc63f"/><circle cx="29" cy="474" r="2" fill="#8cc63f"/><circle cx="19" cy="484" r="2" fill="#8cc63f"/><circle cx="29" cy="484" r="2" fill="#8cc63f"/><ellipse cx="36.4" cy="535.4" rx="4" ry="3" fill="#0c0c0c" transform="rotate(42 36.4 535.4)"/><circle cx="24" cy="523" r="14.700" fill="#f4f6f8" stroke="#9aa0aa" stroke-width=".900"/><circle cx="24" cy="523" r="11.700" fill="#9dbbdc" stroke="#3f74b8" stroke-width="1.300"/><ellipse cx="23" cy="519" rx="9.500" ry="6.500" fill="#dbe7f5" opacity=".75"/><text x="15" y="529" font-size="16" font-weight="bold" fill="#222" font-family="Liberation Serif,serif">EI</text><path d="M9 555h30l-12 13v10h-6v-10z" fill="#dfe6ee" stroke="#56657a" stroke-width="1.500"/><g fill="none" stroke-width="1.800"><path d="M12 603h24v13h-24zM24 603v13" stroke="#e01818"/><path d="M12 616v8M24 616v8M36 616v8" stroke="#27408b"/><path d="M16 602a8 8 0 0 1 16 0" stroke="#e01818"/></g><circle cx="12" cy="603" r="2.400" fill="#e01818"/><circle cx="36" cy="603" r="2.400" fill="#7ab648"/><circle cx="12" cy="616" r="2.400" fill="#e01818"/><circle cx="36" cy="616" r="2.400" fill="#7ab648"/><circle cx="24" cy="616" r="2.400" fill="#e01818"/><path d="M11 637.500h27M11 689.500h27M11 741.500h27" stroke="#eef0f3" stroke-width="1"/><g opacity=".55"><path d="M19 661h14v14h-14z" fill="none" stroke="#e05080" stroke-width="1.500"/><path d="M15 665a8 8 0 0 1 12-10" stroke="#7080c0" stroke-width="2" fill="none"/><path d="M12 663l4 6l4-6z" fill="#7080c0"/><path d="M18 649l18 12V649z" fill="#b8d8d0" opacity=".6"/></g><circle cx="21" cy="707" r="9" fill="#c4daf0" stroke="#55657a" stroke-width="2"/><path d="M28 714l10 9" stroke="#222" stroke-width="4" stroke-linecap="round"/><path d="M22 701l12 12M34 701l-12 12" stroke="#e01010" stroke-width="3"/><path d="M12 757l5-4l12 14l-6 5z" fill="#707070" stroke="#444" stroke-width="1"/><path d="M23 772l6-6l10 4v16h-14z" fill="#f8e020"/><path d="M23 772l6-6l6 5l-8 7z" fill="#e03020"/><text x="19" y="813" font-size="18" font-style="italic" fill="#8890a0" font-family="Liberation Serif,serif">L</text><path d="M13 817h24" stroke="#8aa88a" stroke-width="1" stroke-dasharray="2 2"/><circle cx="12" cy="817" r="2.200" fill="none" stroke="#8ab88a"/><circle cx="37" cy="817" r="2.200" fill="none" stroke="#8ab88a"/><path d="M21 838v10" stroke="#888" stroke-width="1.500"/><path d="M22 839l5 4l-5 4z" fill="#888"/><path d="M13 864q8-5 14 0t11-2v18q-6 4-12 0t-11 2z" fill="#e02020" stroke="#b01010" stroke-width=".800"/><path d="M17 895l3-8l14-17l4 4l-14 17z" fill="#f4c020" stroke="#a07010" stroke-width=".800"/><path d="M17 895l3-8l4 4z" fill="#e8d0a0"/><path d="M17 895l1.500-3.500l2 2z" fill="#222"/><path d="M13 864v20" stroke="#ddd" stroke-width="1.500"/><path d="M32 906v10" stroke="#e8e8e8" stroke-width="2"/><path d="M36 906l5 5l-5 5z" fill="#e8e8e8"/></svg><svg class="sv" style="left:1872px;top:136px" width="48" height="480" viewBox="1872 136 48 480"><path d="M1881 145h31" stroke="#222" stroke-width="2" stroke-dasharray="2 1.500"/><path d="M1884 185V157" stroke="#d02020" stroke-width="1.500"/><path d="M1881 161l3-7l3 7z" fill="#d02020"/><path d="M1884 185H1911" stroke="#208030" stroke-width="1.500"/><path d="M1907 182l7 3l-7 3z" fill="#208030"/><path d="M1884 185l17-17" stroke="#2a2a90" stroke-width="1.500"/><path d="M1897 167l7-2l-2 7z" fill="#2a2a90"/><path d="M1897 225V204" stroke="#d02020" stroke-width="1.500"/><path d="M1894.500 207l2.500-7l2.500 7z" fill="#d02020"/><path d="M1897 225l-12-7" stroke="#2a2a90" stroke-width="1.500"/><path d="M1897 225l13-7" stroke="#208030" stroke-width="1.500"/><path d="M1882 216l6.500 .5l-3 5z" fill="#2a2a90"/><path d="M1913 216l-6.500 .5l3 5z" fill="#208030"/><text x="1900" y="208" font-size="8" font-weight="bold" fill="#333" font-family="Liberation Sans,sans-serif">Z</text><text x="1879" y="215" font-size="8" font-weight="bold" fill="#333" font-family="Liberation Sans,sans-serif">Y</text><text x="1908" y="215" font-size="8" font-weight="bold" fill="#333" font-family="Liberation Sans,sans-serif">X</text><path d="M1883 273V245" stroke="#d02020" stroke-width="1.500"/><path d="M1880 249l3-7l3 7z" fill="#d02020"/><path d="M1883 273H1910" stroke="#208030" stroke-width="1.500"/><path d="M1906 270l7 3l-7 3z" fill="#208030"/><text x="1888" y="265" font-size="11" font-weight="bold" fill="#444" font-family="Liberation Sans,sans-serif" letter-spacing="1">XZ</text><circle cx="1883" cy="273" r="1.800" fill="#2a2a90"/><path d="M1894 287v10" stroke="#555" stroke-width="1.500"/><path d="M1895 288l5 4l-5 4z" fill="#555"/><path d="M1883 339V311" stroke="#2a2a90" stroke-width="1.500"/><path d="M1880 315l3-7l3 7z" fill="#2a2a90"/><path d="M1883 339H1910" stroke="#208030" stroke-width="1.500"/><path d="M1906 336l7 3l-7 3z" fill="#208030"/><text x="1888" y="331" font-size="11" font-weight="bold" fill="#444" font-family="Liberation Sans,sans-serif" letter-spacing="1">XY</text><circle cx="1883" cy="339" r="1.800" fill="#d02020"/><path d="M1894 353v10" stroke="#555" stroke-width="1.500"/><path d="M1895 354l5 4l-5 4z" fill="#555"/><path d="M1883 405V377" stroke="#d02020" stroke-width="1.500"/><path d="M1880 381l3-7l3 7z" fill="#d02020"/><path d="M1883 405H1910" stroke="#2a2a90" stroke-width="1.500"/><path d="M1906 402l7 3l-7 3z" fill="#2a2a90"/><text x="1888" y="397" font-size="11" font-weight="bold" fill="#444" font-family="Liberation Sans,sans-serif" letter-spacing="1">YZ</text><circle cx="1883" cy="405" r="1.800" fill="#208030"/><path d="M1894 419v10" stroke="#555" stroke-width="1.500"/><path d="M1895 420l5 4l-5 4z" fill="#555"/><path d="M1884 470l8-16h20l-8 16z" fill="#cfe0f0" stroke="#2a3a6a" stroke-width="1.300"/><path d="M1888 462h20M1894 454l-7 16M1904 454l-7 16" stroke="#2a3a6a" stroke-width="1.300" fill="none"/><path d="M1893 521v-22" stroke="#d02020" stroke-width="1.300"/><path d="M1890.500 503l2.500-7l2.500 7z" fill="#d02020"/><path d="M1885 510a9 4 0 1 0 14-3" stroke="#2a5aa0" stroke-width="1.500" fill="none"/><path d="M1896 505l5 1l-3 4z" fill="#2a5aa0"/><text x="1901" y="504" font-size="11" font-weight="bold" font-style="italic" fill="#333" font-family="Liberation Sans,sans-serif">Z</text><path d="M1894 529v10" stroke="#555" stroke-width="1.500"/><path d="M1895 530l5 4l-5 4z" fill="#555"/><path d="M1884 587V559" stroke="#d02020" stroke-width="1.500"/><path d="M1881 563l3-7l3 7z" fill="#d02020"/><path d="M1884 587H1911" stroke="#d02020" stroke-width="1.500"/><path d="M1907 584l7 3l-7 3z" fill="#d02020"/><path d="M1884 587l17-17" stroke="#d02020" stroke-width="1.500"/><path d="M1897 569l7-2l-2 7z" fill="#d02020"/><path d="M1905 596v10" stroke="#e8e8e8" stroke-width="2"/><path d="M1909 596l5 5l-5 5z" fill="#e8e8e8"/></svg>
<!-- s_leftwin -->
<div class="t" style="left:62px;top:178.500px;font-size:15px">Загружение 1</div><svg class="sv" style="left:80px;top:935px" width="60" height="45" viewBox="0 0 60 45"><g fill="none" stroke-width="1.100"><path d="M20.500 39.500L20 22.500" stroke="#f00"/><path d="M16.500 27l3.500-4.500l3.500 4.500" stroke="#f00"/><path d="M20.500 39.500l-7-9" stroke="#00f"/><path d="M13.500 35v-4.500h4.500" stroke="#00f"/><path d="M20.500 39.500l17-3.500" stroke="#080"/><path d="M32.500 33l5 3l-4.500 4" stroke="#080"/></g><text x="13.500" y="15.700" font-family="Liberation Sans,sans-serif" font-weight="bold" font-size="16" fill="#f00" textLength="9" lengthAdjust="spacingAndGlyphs">Z</text><text x="4" y="24.900" font-family="Liberation Sans,sans-serif" font-weight="bold" font-size="16" fill="#00f" textLength="10.500" lengthAdjust="spacingAndGlyphs">Y</text><text x="37.500" y="34" font-family="Liberation Sans,sans-serif" font-weight="bold" font-size="16" fill="#0a7a0a" textLength="11.500" lengthAdjust="spacingAndGlyphs">X</text></svg><div class="a" style="left:448px;top:933px;width:2px;height:47px;background:#8c8c28"></div><div class="a" style="left:446px;top:980px;width:5px;height:5px;background:#00f"></div><div class="a" style="left:68px;top:200px;width:869px;height:733px;background:#f0f0f0;border:1px solid #00b294;box-shadow:0 4px 14px rgba(0,0,0,.35)"></div><div class="a" style="left:68px;top:200px;width:869px;height:31px;background:#00b294"></div><div class="t" style="left:98px;top:210px;font-size:12px;letter-spacing:-.09px">Швеллер·: Главные и эквивалентные напряжения по усилиям (01)</div><svg class="sv" style="left:800px;top:200px" width="137" height="31" viewBox="0 0 137 31"><g stroke="#000" stroke-width="1" fill="none"><path d="M17 15.500h10"/><path d="M62.500 10.500h9v9h-9z"/><path d="M108 10l10 10M118 10l-10 10"/></g></svg><div class="tbtn" style="left:61.5px;width:100px;letter-spacing:-0.35px">Открыть CSV</div><div class="tbtn" style="left:149px;width:100px;letter-spacing:-0.15px">Сохранить</div><div class="tbtn" style="left:236.5px;width:100px;letter-spacing:-0.3px">Сверстать</div><div class="tbtn" style="left:338px;width:100px;letter-spacing:0px">Предыдущий</div><div class="tbtn" style="left:425px;width:100px;letter-spacing:0px">Следующий</div><div class="tbtn" style="left:511.5px;width:100px;letter-spacing:0px">Копировать</div><div class="tbtn" style="left:598px;width:100px;letter-spacing:0px">Фильтр</div><div class="tbtn" style="left:686px;width:100px;letter-spacing:-0.15px">На схему</div><div class="tbtn" style="left:773px;width:100px;letter-spacing:0px">Обновить</div><div class="tbtn" style="left:859.5px;width:100px;letter-spacing:0px">Шрифт</div><svg class="sv" style="left:68px;top:232px" width="869" height="40" viewBox="68 232 869 40"><rect x="109.500" y="244.500" width="10.500" height="9" fill="#18a038" stroke="#0a7a22" stroke-width="1"/><path d="M112 246.500l5.500 5M117.500 246.500l-5.500 5" stroke="#fff" stroke-width="1.500"/><path d="M105 245h5" stroke="#111" stroke-width="1.200"/><path d="M108 241.500l3.500 3.500l-3.500 3.500" stroke="#0aa0c0" stroke-width="1.400" fill="none"/><rect x="192" y="241" width="14" height="13.500" fill="#111"/><rect x="195" y="242" width="8" height="5" fill="#f0f0f0"/><rect x="195.500" y="249.500" width="7" height="5" fill="#7a7a10"/><rect x="200" y="250.500" width="2" height="3.500" fill="#111"/><path d="M192.500 242v12M205.500 242v12" stroke="#8a8a10" stroke-width="1"/><path d="M282 247l2-6h8l2 6" fill="#fff" stroke="#111" stroke-width="1"/><path d="M285 243h6M284.500 245h7" stroke="#111" stroke-width=".800"/><rect x="279.500" y="247" width="16" height="5.500" rx="1" fill="#fff" stroke="#111" stroke-width="1"/><path d="M281 252.500v2h13v-2" fill="#ddd" stroke="#111" stroke-width="1"/><path d="M289 250h3" stroke="#c8c800" stroke-width="1.200"/><path d="M334 254h7l-3.500 3.500z" fill="#333"/><path d="M388 241l7.500 7h-4.500v6h-6v-6h-4.500z" fill="#0a7a0a" stroke="#064a06" stroke-width=".600"/><path d="M474 254.500l7.500-7h-4.500v-6h-6v6h-4.500z" fill="#0a7a0a" stroke="#064a06" stroke-width=".600"/><path d="M554.500 241.500h6l2 2v7h-8z" fill="#fff" stroke="#111" stroke-width="1"/><path d="M556 244h4M556 246h5M556 248h5" stroke="#111" stroke-width=".700"/><path d="M560.500 246.500h6l2 2v7h-8z" fill="#fff" stroke="#00008a" stroke-width="1"/><path d="M562 250h4M562 252h5M562 254h5" stroke="#00008a" stroke-width=".700"/><path d="M641.500 242.500h14l-6 7v6h-2v-6z" fill="#fff" stroke="#111" stroke-width="1.100"/><path d="M729.500 242.500h14l-6 7v6h-2v-6z" fill="#fff" stroke="#111" stroke-width="1.100"/><path d="M731.500 243h10l-4 4.500h-2z" fill="#f01010"/><path d="M820 242q-4 1-3 6" stroke="#0a8a0a" stroke-width="1.500" fill="none"/><path d="M814.500 246.500l3 4l3-4z" fill="#0a8a0a" transform="translate(0,-1)"/><path d="M826 254q4-1 3-6" stroke="#0a8a0a" stroke-width="1.500" fill="none"/><path d="M825.500 250l3-4l3 4z" fill="#0a8a0a"/><text x="901" y="255" font-size="15" font-weight="bold" fill="#0a0aa0" font-family="Liberation Serif,serif">A</text><text x="911" y="250" font-size="11" font-weight="bold" fill="#0a0aa0" font-family="Liberation Sans,sans-serif">a</text></svg><svg class="sv" style="left:76px;top:206px" width="20" height="20" viewBox="0 0 20 20"><path d="M4.500 2.500h9l2 2v11h-11z" fill="#eef2fa" stroke="#cfd6e6" stroke-width="1"/><rect x="6" y="6" width="8" height="8" fill="#fff" stroke="#7a86c0" stroke-width=".800"/><path d="M6 8.500h8M6 11h8M8.500 6v8M11 6v8" stroke="#7a86c0" stroke-width=".600"/><rect x="1.500" y="12.500" width="6" height="4.500" fill="#dfe8f4" stroke="#9ab" stroke-width=".800"/><path d="M9 16.500h7" stroke="#111" stroke-width="1.200"/></svg><div class="a" style="left:69px;top:272px;width:867px;height:1px;background:#a0a0a0"></div><div class="a" style="left:69px;top:273px;width:867px;height:1px;background:#fff"></div><div class="a" style="left:75px;top:277px;width:855px;height:60px;background:#fff;border:1px solid #828790"></div><div class="t" style="left:78px;top:281px;font-size:11px">Единицы измерения напряжений: т/м2</div><div class="t" style="left:78px;top:294px;font-size:11px">Единицы измерения углов: DG</div><div class="t" style="left:78px;top:307px;font-size:11px">Mon Nov 13 17:29:04 2017 &nbsp;Швеллер· &nbsp;основная схема</div><div class="a" style="left:75px;top:340px;width:855px;height:568px;background:#fff"></div><div class="hd" style="left:103px;letter-spacing:-0.6px">ЗАГР</div><div class="hd" style="left:140px;letter-spacing:-0.4px">Тип ЭЛЕМ</div><div class="hd" style="left:211px;letter-spacing:-0.8px">ЭЛЕМ</div><div class="hd" style="left:265px;letter-spacing:-0.9px">СЕЧ</div><div class="hd" style="left:325px;letter-spacing:0.3px">Точка</div><div class="hd" style="left:376px;letter-spacing:0px">NX, т/м2</div><div class="hd" style="left:441px;letter-spacing:0px">TY, т/м2</div><div class="hd" style="left:501px;letter-spacing:0px">TZ, т/м2</div><div class="hd" style="left:561px;letter-spacing:0px">N1, т/м2</div><div class="hd" style="left:621px;letter-spacing:0px">N2, т/м2</div><div class="hd" style="left:681px;letter-spacing:0px">NE01</div><div class="hd" style="left:741px;letter-spacing:0px">NS01</div><div class="a" style="left:134px;top:340px;width:1px;height:20px;background:#e5e5e5"></div><div class="a" style="left:205px;top:340px;width:1px;height:20px;background:#e5e5e5"></div><div class="a" style="left:259px;top:340px;width:1px;height:20px;background:#e5e5e5"></div><div class="a" style="left:319px;top:340px;width:1px;height:20px;background:#e5e5e5"></div><div class="a" style="left:370px;top:340px;width:1px;height:20px;background:#e5e5e5"></div><div class="a" style="left:435px;top:340px;width:1px;height:20px;background:#e5e5e5"></div><div class="a" style="left:495px;top:340px;width:1px;height:20px;background:#e5e5e5"></div><div class="a" style="left:555px;top:340px;width:1px;height:20px;background:#e5e5e5"></div><div class="a" style="left:615px;top:340px;width:1px;height:20px;background:#e5e5e5"></div><div class="a" style="left:675px;top:340px;width:1px;height:20px;background:#e5e5e5"></div><div class="a" style="left:735px;top:340px;width:1px;height:20px;background:#e5e5e5"></div><div class="a" style="left:792px;top:340px;width:1px;height:20px;background:#e5e5e5"></div><div class="t" style="left:83px;top:363px;font-size:11px;letter-spacing:-.47px">1 - ЗАГРУЖЕНИЕ 1</div><div class="row" style="top:374px;"><span style="left:8px">1</span><span style="left:63px">10</span><span style="left:134px">1</span><span style="left:188px">1</span><span style="left:248px">1</span><span style="left:299px">-220.8</span><span style="left:364px">0</span><span style="left:424px">0</span><span style="left:484px">0</span><span style="left:544px">-220.8</span><span style="left:604px">0</span><span style="left:664px">-220.8</span></div><div class="row" style="top:388px;"><span style="left:8px">1</span><span style="left:63px">10</span><span style="left:134px">1</span><span style="left:188px">1</span><span style="left:248px">2</span><span style="left:299px">-430.2</span><span style="left:364px">0</span><span style="left:424px">0</span><span style="left:484px">0</span><span style="left:544px">-430.2</span><span style="left:604px">0</span><span style="left:664px">-430.2</span></div><div class="row" style="top:402px;"><span style="left:8px">1</span><span style="left:63px">10</span><span style="left:134px">1</span><span style="left:188px">1</span><span style="left:248px">3</span><span style="left:299px">-598.5</span><span style="left:364px">0</span><span style="left:424px">0</span><span style="left:484px">0</span><span style="left:544px">-598.5</span><span style="left:604px">0</span><span style="left:664px">-598.5</span></div><div class="row" style="top:416px;"><span style="left:8px">1</span><span style="left:63px">10</span><span style="left:134px">1</span><span style="left:188px">1</span><span style="left:248px">4</span><span style="left:299px">-389.1</span><span style="left:364px">0</span><span style="left:424px">0</span><span style="left:484px">0</span><span style="left:544px">-389.1</span><span style="left:604px">0</span><span style="left:664px">-389.1</span></div><div class="row" style="top:430px;"><span style="left:8px">1</span><span style="left:63px">10</span><span style="left:134px">1</span><span style="left:188px">1</span><span style="left:248px">5</span><span style="left:299px">-514.4</span><span style="left:364px">0</span><span style="left:424px">-21.3</span><span style="left:484px">0.9</span><span style="left:544px">-515.2</span><span style="left:604px">0.9</span><span style="left:664px">-515.2</span></div><div class="row" style="top:444px;"><span style="left:8px">1</span><span style="left:63px">10</span><span style="left:134px">1</span><span style="left:188px">1</span><span style="left:248px">6</span><span style="left:299px">-462.0</span><span style="left:364px">0</span><span style="left:424px">-21.3</span><span style="left:484px">1.0</span><span style="left:544px">-463.0</span><span style="left:604px">1.0</span><span style="left:664px">-463.0</span></div><div class="a" style="left:78px;top:459px;width:835px;height:13px;background:#0078d7;border-top:1px dotted #e8c070"></div><div class="row" style="top:458px;color:#fff;"><span style="left:8px">1</span><span style="left:63px">10</span><span style="left:134px">1</span><span style="left:188px">1</span><span style="left:248px">7</span><span style="left:299px">-354.4</span><span style="left:364px">10.2</span><span style="left:424px">0</span><span style="left:484px">0.3</span><span style="left:544px">-354.7</span><span style="left:604px">0.3</span><span style="left:664px">-354.7</span></div><div class="row" style="top:472px;"><span style="left:8px">1</span><span style="left:63px">10</span><span style="left:134px">1</span><span style="left:188px">1</span><span style="left:248px">8</span><span style="left:299px">-522.7</span><span style="left:364px">10.2</span><span style="left:424px">0</span><span style="left:484px">0.2</span><span style="left:544px">-522.9</span><span style="left:604px">0.2</span><span style="left:664px">-522.9</span></div><div class="row" style="top:486px;"><span style="left:8px">1</span><span style="left:63px">10</span><span style="left:134px">1</span><span style="left:188px">1</span><span style="left:248px">9</span><span style="left:299px">-438.6</span><span style="left:364px">10.2</span><span style="left:424px">-21.3</span><span style="left:484px">1.3</span><span style="left:544px">-439.9</span><span style="left:604px">1.3</span><span style="left:664px">-439.9</span></div><div class="row" style="top:500px;"><span style="left:8px">1</span><span style="left:63px">10</span><span style="left:134px">1</span><span style="left:188px">1</span><span style="left:248px">10</span><span style="left:299px">-325.5</span><span style="left:364px">6.3</span><span style="left:424px">-4.3</span><span style="left:484px">0.2</span><span style="left:544px">-325.7</span><span style="left:604px">0.2</span><span style="left:664px">-325.7</span></div><div class="row" style="top:514px;"><span style="left:8px">1</span><span style="left:63px">10</span><span style="left:134px">1</span><span style="left:188px">1</span><span style="left:248px">11</span><span style="left:299px">-350.8</span><span style="left:364px">6.3</span><span style="left:424px">-4.3</span><span style="left:484px">0.2</span><span style="left:544px">-350.9</span><span style="left:604px">0.2</span><span style="left:664px">-350.9</span></div><div class="row" style="top:528px;"><span style="left:8px">1</span><span style="left:63px">10</span><span style="left:134px">1</span><span style="left:188px">1</span><span style="left:248px">12</span><span style="left:299px">-468.6</span><span style="left:364px">6.3</span><span style="left:424px">-4.3</span><span style="left:484px">0.1</span><span style="left:544px">-468.7</span><span style="left:604px">0.1</span><span style="left:664px">-468.7</span></div><div class="row" style="top:542px;"><span style="left:8px">1</span><span style="left:63px">10</span><span style="left:134px">1</span><span style="left:188px">1</span><span style="left:248px">13</span><span style="left:299px">-493.8</span><span style="left:364px">6.3</span><span style="left:424px">-4.3</span><span style="left:484px">0.1</span><span style="left:544px">-493.9</span><span style="left:604px">0.1</span><span style="left:664px">-493.9</span></div><div class="row" style="top:556px;"><span style="left:8px">1</span><span style="left:63px">10</span><span style="left:134px">1</span><span style="left:188px">1</span><span style="left:248px">14</span><span style="left:299px">-403.1</span><span style="left:364px">10.2</span><span style="left:424px">-17.2</span><span style="left:484px">1.0</span><span style="left:544px">-404.1</span><span style="left:604px">1.0</span><span style="left:664px">-404.1</span></div><div class="row" style="top:570px;"><span style="left:8px">1</span><span style="left:63px">10</span><span style="left:134px">1</span><span style="left:188px">1</span><span style="left:248px">15</span><span style="left:299px">-520.9</span><span style="left:364px">10.2</span><span style="left:424px">-17.2</span><span style="left:484px">0.8</span><span style="left:544px">-521.7</span><span style="left:604px">0.8</span><span style="left:664px">-521.7</span></div><div class="row" style="top:584px;"><span style="left:8px">1</span><span style="left:63px">10</span><span style="left:134px">1</span><span style="left:188px">2</span><span style="left:248px">1</span><span style="left:299px">-264.4</span><span style="left:364px">0</span><span style="left:424px">0</span><span style="left:484px">0</span><span style="left:544px">-264.4</span><span style="left:604px">0</span><span style="left:664px">-264.4</span></div><div class="row" style="top:598px;"><span style="left:8px">1</span><span style="left:63px">10</span><span style="left:134px">1</span><span style="left:188px">2</span><span style="left:248px">2</span><span style="left:299px">-431.9</span><span style="left:364px">0</span><span style="left:424px">0</span><span style="left:484px">0</span><span style="left:544px">-431.9</span><span style="left:604px">0</span><span style="left:664px">-431.9</span></div><div class="row" style="top:612px;"><span style="left:8px">1</span><span style="left:63px">10</span><span style="left:134px">1</span><span style="left:188px">2</span><span style="left:248px">3</span><span style="left:299px">-566.5</span><span style="left:364px">0</span><span style="left:424px">0</span><span style="left:484px">0</span><span style="left:544px">-566.5</span><span style="left:604px">0</span><span style="left:664px">-566.5</span></div><div class="row" style="top:626px;"><span style="left:8px">1</span><span style="left:63px">10</span><span style="left:134px">1</span><span style="left:188px">2</span><span style="left:248px">4</span><span style="left:299px">-399.0</span><span style="left:364px">0</span><span style="left:424px">0</span><span style="left:484px">0</span><span style="left:544px">-399.0</span><span style="left:604px">0</span><span style="left:664px">-399.0</span></div><div class="row" style="top:640px;"><span style="left:8px">1</span><span style="left:63px">10</span><span style="left:134px">1</span><span style="left:188px">2</span><span style="left:248px">5</span><span style="left:299px">-499.2</span><span style="left:364px">0</span><span style="left:424px">-21.3</span><span style="left:484px">0.9</span><span style="left:544px">-500.1</span><span style="left:604px">0.9</span><span style="left:664px">-500.1</span></div><div class="row" style="top:654px;"><span style="left:8px">1</span><span style="left:63px">10</span><span style="left:134px">1</span><span style="left:188px">2</span><span style="left:248px">6</span><span style="left:299px">-457.3</span><span style="left:364px">0</span><span style="left:424px">-21.3</span><span style="left:484px">1.0</span><span style="left:544px">-458.3</span><span style="left:604px">1.0</span><span style="left:664px">-458.3</span></div><div class="row" style="top:668px;"><span style="left:8px">1</span><span style="left:63px">10</span><span style="left:134px">1</span><span style="left:188px">2</span><span style="left:248px">7</span><span style="left:299px">-371.3</span><span style="left:364px">10.2</span><span style="left:424px">0</span><span style="left:484px">0.3</span><span style="left:544px">-371.6</span><span style="left:604px">0.3</span><span style="left:664px">-371.6</span></div><div class="row" style="top:682px;"><span style="left:8px">1</span><span style="left:63px">10</span><span style="left:134px">1</span><span style="left:188px">2</span><span style="left:248px">8</span><span style="left:299px">-505.9</span><span style="left:364px">10.2</span><span style="left:424px">0</span><span style="left:484px">0.2</span><span style="left:544px">-506.1</span><span style="left:604px">0.2</span><span style="left:664px">-506.1</span></div><div class="row" style="top:696px;"><span style="left:8px">1</span><span style="left:63px">10</span><span style="left:134px">1</span><span style="left:188px">2</span><span style="left:248px">9</span><span style="left:299px">-438.6</span><span style="left:364px">10.2</span><span style="left:424px">-21.3</span><span style="left:484px">1.3</span><span style="left:544px">-439.9</span><span style="left:604px">1.3</span><span style="left:664px">-439.9</span></div><div class="row" style="top:710px;"><span style="left:8px">1</span><span style="left:63px">10</span><span style="left:134px">1</span><span style="left:188px">2</span><span style="left:248px">10</span><span style="left:299px">-348.1</span><span style="left:364px">6.3</span><span style="left:424px">-4.3</span><span style="left:484px">0.2</span><span style="left:544px">-348.3</span><span style="left:604px">0.2</span><span style="left:664px">-348.3</span></div><div class="row" style="top:724px;"><span style="left:8px">1</span><span style="left:63px">10</span><span style="left:134px">1</span><span style="left:188px">2</span><span style="left:248px">11</span><span style="left:299px">-368.3</span><span style="left:364px">6.3</span><span style="left:424px">-4.3</span><span style="left:484px">0.2</span><span style="left:544px">-368.5</span><span style="left:604px">0.2</span><span style="left:664px">-368.5</span></div><div class="row" style="top:738px;"><span style="left:8px">1</span><span style="left:63px">10</span><span style="left:134px">1</span><span style="left:188px">2</span><span style="left:248px">12</span><span style="left:299px">-462.6</span><span style="left:364px">6.3</span><span style="left:424px">-4.3</span><span style="left:484px">0.1</span><span style="left:544px">-462.7</span><span style="left:604px">0.1</span><span style="left:664px">-462.7</span></div><div class="row" style="top:752px;"><span style="left:8px">1</span><span style="left:63px">10</span><span style="left:134px">1</span><span style="left:188px">2</span><span style="left:248px">13</span><span style="left:299px">-482.8</span><span style="left:364px">6.3</span><span style="left:424px">-4.3</span><span style="left:484px">0.1</span><span style="left:544px">-482.9</span><span style="left:604px">0.1</span><span style="left:664px">-482.9</span></div><div class="row" style="top:766px;"><span style="left:8px">1</span><span style="left:63px">10</span><span style="left:134px">1</span><span style="left:188px">2</span><span style="left:248px">14</span><span style="left:299px">-410.2</span><span style="left:364px">10.2</span><span style="left:424px">-17.2</span><span style="left:484px">1.0</span><span style="left:544px">-411.2</span><span style="left:604px">1.0</span><span style="left:664px">-411.2</span></div><div class="row" style="top:780px;"><span style="left:8px">1</span><span style="left:63px">10</span><span style="left:134px">1</span><span style="left:188px">2</span><span style="left:248px">15</span><span style="left:299px">-504.5</span><span style="left:364px">10.2</span><span style="left:424px">-17.2</span><span style="left:484px">0.8</span><span style="left:544px">-505.2</span><span style="left:604px">0.8</span><span style="left:664px">-505.2</span></div><div class="row" style="top:794px;"><span style="left:8px">1</span><span style="left:63px">10</span><span style="left:134px">2</span><span style="left:188px">1</span><span style="left:248px">1</span><span style="left:299px">-264.4</span><span style="left:364px">0</span><span style="left:424px">0</span><span style="left:484px">0</span><span style="left:544px">-264.4</span><span style="left:604px">0</span><span style="left:664px">-264.4</span></div><div class="row" style="top:808px;"><span style="left:8px">1</span><span style="left:63px">10</span><span style="left:134px">2</span><span style="left:188px">1</span><span style="left:248px">2</span><span style="left:299px">-431.9</span><span style="left:364px">0</span><span style="left:424px">0</span><span style="left:484px">0</span><span style="left:544px">-431.9</span><span style="left:604px">0</span><span style="left:664px">-431.9</span></div><div class="row" style="top:822px;"><span style="left:8px">1</span><span style="left:63px">10</span><span style="left:134px">2</span><span style="left:188px">1</span><span style="left:248px">3</span><span style="left:299px">-566.5</span><span style="left:364px">0</span><span style="left:424px">0</span><span style="left:484px">0</span><span style="left:544px">-566.5</span><span style="left:604px">0</span><span style="left:664px">-566.5</span></div><div class="row" style="top:836px;"><span style="left:8px">1</span><span style="left:63px">10</span><span style="left:134px">2</span><span style="left:188px">1</span><span style="left:248px">4</span><span style="left:299px">-399.0</span><span style="left:364px">0</span><span style="left:424px">0</span><span style="left:484px">0</span><span style="left:544px">-399.0</span><span style="left:604px">0</span><span style="left:664px">-399.0</span></div><div class="row" style="top:850px;"><span style="left:8px">1</span><span style="left:63px">10</span><span style="left:134px">2</span><span style="left:188px">1</span><span style="left:248px">5</span><span style="left:299px">-499.2</span><span style="left:364px">0</span><span style="left:424px">-21.3</span><span style="left:484px">0.9</span><span style="left:544px">-500.1</span><span style="left:604px">0.9</span><span style="left:664px">-500.1</span></div><div class="row" style="top:864px;"><span style="left:8px">1</span><span style="left:63px">10</span><span style="left:134px">2</span><span style="left:188px">1</span><span style="left:248px">6</span><span style="left:299px">-457.3</span><span style="left:364px">0</span><span style="left:424px">-21.3</span><span style="left:484px">1.0</span><span style="left:544px">-458.3</span><span style="left:604px">1.0</span><span style="left:664px">-458.3</span></div><div class="row" style="top:878px;"><span style="left:8px">1</span><span style="left:63px">10</span><span style="left:134px">2</span><span style="left:188px">1</span><span style="left:248px">7</span><span style="left:299px">-371.3</span><span style="left:364px">10.2</span><span style="left:424px">0</span><span style="left:484px">0.3</span><span style="left:544px">-371.6</span><span style="left:604px">0.3</span><span style="left:664px">-371.6</span></div><div class="row" style="top:892px;"><span style="left:8px">1</span><span style="left:63px">10</span><span style="left:134px">2</span><span style="left:188px">1</span><span style="left:248px">8</span><span style="left:299px">-505.9</span><span style="left:364px">10.2</span><span style="left:424px">0</span><span style="left:484px">0.2</span><span style="left:544px">-506.1</span><span style="left:604px">0.2</span><span style="left:664px">-506.1</span></div><div class="a" style="left:75px;top:906px;width:838px;height:1px;background:#c6c6c6"></div><div class="vl" style="left:134px"></div><div class="vl" style="left:205px"></div><div class="vl" style="left:259px"></div><div class="vl" style="left:319px"></div><div class="vl" style="left:370px"></div><div class="vl" style="left:435px"></div><div class="vl" style="left:495px"></div><div class="vl" style="left:555px"></div><div class="vl" style="left:615px"></div><div class="vl" style="left:675px"></div><div class="vl" style="left:735px"></div><div class="a" style="left:134px;top:459px;width:1px;height:13px;background:#d8e6f5"></div><div class="a" style="left:205px;top:459px;width:1px;height:13px;background:#d8e6f5"></div><div class="a" style="left:259px;top:459px;width:1px;height:13px;background:#d8e6f5"></div><div class="a" style="left:319px;top:459px;width:1px;height:13px;background:#d8e6f5"></div><div class="a" style="left:370px;top:459px;width:1px;height:13px;background:#d8e6f5"></div><div class="a" style="left:435px;top:459px;width:1px;height:13px;background:#d8e6f5"></div><div class="a" style="left:495px;top:459px;width:1px;height:13px;background:#d8e6f5"></div><div class="a" style="left:555px;top:459px;width:1px;height:13px;background:#d8e6f5"></div><div class="a" style="left:615px;top:459px;width:1px;height:13px;background:#d8e6f5"></div><div class="a" style="left:675px;top:459px;width:1px;height:13px;background:#d8e6f5"></div><div class="a" style="left:735px;top:459px;width:1px;height:13px;background:#d8e6f5"></div><div class="a" style="left:75px;top:907px;width:856px;height:1px;background:#e3e3e3"></div><div class="a" style="left:930px;top:340px;width:1px;height:568px;background:#e3e3e3"></div><div class="a" style="left:913px;top:340px;width:17px;height:567px;background:#f0f0f0"></div><div class="a" style="left:914px;top:355px;width:15px;height:137px;background:#cdcdcd"></div><svg class="sv" style="left:913px;top:340px" width="17" height="567" viewBox="0 0 17 567"><g fill="none" stroke="#505050" stroke-width="1.400"><path d="M5 8.500l3.500-3.500l3.500 3.500"/><path d="M5 558l3.500 3.500l3.500-3.500"/></g></svg><div class="a" style="left:71px;top:909px;width:61px;height:21px;background:#fdfdfd;border-right:1px solid #dadada"></div><div class="a" style="left:69.500px;top:275px;width:1.500px;height:656px;background:#8c8c8c"></div><div class="t" style="left:78.500px;top:916px;font-size:11px">Стержни</div>
<!-- s_rightwin -->
<div class="t" style="left:975.500px;top:179.500px;font-size:10px;letter-spacing:.45px">швеллер·.l3d</div><svg class="sv" style="left:1040px;top:220px" width="300" height="290" viewBox="1040 220 300 290"><g fill="none" stroke="#000"><path d="M1057 375.500H1324M1182.500 229V497" stroke-width="1"/><path d="M1108 270H1300V314.500H1167V434.500H1300V480H1108Z" stroke-width="2.600" stroke-linejoin="miter"/></g><path d="M1182.500 229l-2 9h4z" fill="#000"/><path d="M1057 375.500l9-2v4z" fill="#000"/><circle cx="1108" cy="270" r="1.800" fill="#fff" stroke="#000" stroke-width=".800"/><circle cx="1182.5" cy="270" r="1.800" fill="#fff" stroke="#000" stroke-width=".800"/><circle cx="1204" cy="270" r="1.800" fill="#fff" stroke="#000" stroke-width=".800"/><circle cx="1300" cy="270" r="1.800" fill="#fff" stroke="#000" stroke-width=".800"/><circle cx="1204" cy="314.5" r="1.800" fill="#fff" stroke="#000" stroke-width=".800"/><circle cx="1108" cy="375.5" r="1.800" fill="#fff" stroke="#000" stroke-width=".800"/><circle cx="1167" cy="375.5" r="1.800" fill="#fff" stroke="#000" stroke-width=".800"/><circle cx="1182.5" cy="375.5" r="1.800" fill="#fff" stroke="#000" stroke-width=".800"/><circle cx="1204" cy="434.5" r="1.800" fill="#fff" stroke="#000" stroke-width=".800"/><circle cx="1108" cy="480" r="1.800" fill="#fff" stroke="#000" stroke-width=".800"/><circle cx="1182.5" cy="480" r="1.800" fill="#fff" stroke="#000" stroke-width=".800"/><circle cx="1204" cy="480" r="1.800" fill="#fff" stroke="#000" stroke-width=".800"/><circle cx="1300" cy="480" r="1.800" fill="#fff" stroke="#000" stroke-width=".800"/><text x="1096" y="264" font-size="16" font-family="Liberation Serif,serif" font-weight="bold">4</text><text x="1172" y="264" font-size="16" font-family="Liberation Serif,serif" font-weight="bold">8</text><text x="1200" y="264" font-size="16" font-family="Liberation Serif,serif" font-weight="bold">13</text><text x="1302" y="264" font-size="16" font-family="Liberation Serif,serif" font-weight="bold">3</text><text x="1198" y="332" font-size="16" font-family="Liberation Serif,serif" font-weight="bold">12</text><text x="1095" y="367" font-size="16" font-family="Liberation Serif,serif" font-weight="bold">5</text><text x="1151" y="367" font-size="16" font-family="Liberation Serif,serif" font-weight="bold">6</text><text x="1184" y="367" font-size="16" font-family="Liberation Serif,serif" font-weight="bold">9</text><text x="1198" y="427" font-size="16" font-family="Liberation Serif,serif" font-weight="bold">11</text><text x="1100" y="496" font-size="16" font-family="Liberation Serif,serif" font-weight="bold">1</text><text x="1171" y="496" font-size="16" font-family="Liberation Serif,serif" font-weight="bold">7</text><text x="1199" y="496" font-size="16" font-family="Liberation Serif,serif" font-weight="bold">10</text><text x="1302" y="496" font-size="16" font-family="Liberation Serif,serif" font-weight="bold">2</text><text x="1186" y="241" font-size="21" font-family="Liberation Serif,serif" font-weight="bold">Z1</text><text x="1053" y="398" font-size="21" font-family="Liberation Serif,serif" font-weight="bold">Y1</text></svg><div class="a" style="left:1042px;top:604px;width:358px;height:351px;border:1px solid #000;border-bottom:1px solid #000"></div><div class="a" style="left:1042px;top:656px;width:358px;height:1px;background:#000"></div><div class="a" style="left:1042px;top:619px;width:358px;text-align:center;font-size:20.5px;font-weight:bold;line-height:22px;letter-spacing:.55px">Примечание</div><div class="a" style="left:1055px;top:658px;width:334px;font-size:20.2px;line-height:24.6px;text-align:justify;letter-spacing:.62px"><div>1. Точки 5 и 6 всегда лежат на пересечении оси Y1 с контуром сечения.</div><div>2. Точки 7 и 8 всегда лежат на пересечении оси Z1 с контуром сечения.</div><div>3. Точки 10, 11, 12, 13 лежат на одной вертикали, проходящей через середину полок.</div><div>4. Точки 14 и 15 принадлежат стенке у стыков с полками.</div><div>5. Всего 15 точек.</div></div><svg class="sv" style="left:1460px;top:230px" width="350" height="730" viewBox="1460 230 350 730"><polygon points="1473.6,357.0 1575.2,448.4 1575.2,945.9 1473.6,854.5" fill="#b0b85c" stroke="none" stroke-width="1"/><path d="M1473.600 456.5L1575.200 545.3" stroke="#e6ec96" stroke-width="1" stroke-dasharray="6 6" fill="none"/><path d="M1473.600 557L1575.200 645.8" stroke="#e6ec96" stroke-width="1" stroke-dasharray="6 6" fill="none"/><path d="M1473.600 658L1575.200 746.8" stroke="#e6ec96" stroke-width="1" stroke-dasharray="6 6" fill="none"/><path d="M1473.600 755.4L1575.200 844.2" stroke="#e6ec96" stroke-width="1" stroke-dasharray="6 6" fill="none"/><polygon points="1575.2,448.4 1607.4,431.2 1607.4,928.7 1575.2,945.9" fill="#656832" stroke="none" stroke-width="1"/><polygon points="1607.4,431.2 1684.8,281.0 1684.8,778.5 1607.4,819.4" fill="#656832" stroke="none" stroke-width="1"/><polygon points="1684.8,281.0 1761.6,348.6 1761.6,846.1 1684.8,778.5" fill="#e5ec8f" stroke="none" stroke-width="1"/><polygon points="1684.8,380.8 1761.6,446.6 1761.6,846.1 1684.8,778.5" fill="#e2e98a"/><polygon points="1684.8,479.5 1761.6,545.3 1761.6,846.1 1684.8,778.5" fill="#d6dd80"/><polygon points="1684.8,581.8 1761.6,647.6 1761.6,846.1 1684.8,778.5" fill="#bcc468"/><polygon points="1684.8,682.3 1761.6,748.1 1761.6,846.1 1684.8,778.5" fill="#b3bb5e"/><path d="M1684.8 581.800L1761.6 647.6" stroke="#e8ee9a" stroke-width=".800" fill="none"/><path d="M1684.8 682.300L1761.6 748.1" stroke="#e8ee9a" stroke-width="1" stroke-dasharray="6 6" fill="none"/><polygon points="1761.6,348.6 1793.4,331.5 1793.4,829.0 1761.6,846.1" fill="#656832" stroke="none" stroke-width="1"/><polygon points="1473.6,357.0 1692.2,240.8 1793.4,331.5 1761.6,348.6 1684.8,281.0 1531.4,361.8 1607.4,431.2 1575.2,448.4" fill="#eaf07f" stroke="none" stroke-width="1"/><polygon points="1531.4,361.8 1684.8,281.0 1684.8,341.0 1607.4,431.2" fill="#656832" stroke="none" stroke-width="1"/><polyline points="1473.6,357.0 1692.2,240.8 1793.4,331.5" fill="none" stroke="#000" stroke-width="1"/><polyline points="1531.4,361.8 1607.4,431.2 1607.4,928.7" fill="none" stroke="#000" stroke-width="1"/><polyline points="1473.6,357.0 1473.6,854.5" fill="none" stroke="#000" stroke-width="1"/><polyline points="1793.4,331.5 1793.4,829.0" fill="none" stroke="#000" stroke-width="1"/><path d="M1619.500 310V854.500" stroke="#f24a44" stroke-width="1" fill="none"/><linearGradient id="rc" x1="0" x2="1" y1="0" y2="0"><stop offset="0" stop-color="#ff5a5a"/><stop offset=".4" stop-color="#ff0808"/><stop offset="1" stop-color="#9c0000"/></linearGradient><path d="M1619.500 272l-10 34q1 7 10 8q9-1 10-8z" fill="url(#rc)"/><text x="1618.500" y="267.700" font-size="11" fill="#f00" font-family="Liberation Sans,sans-serif">Z</text><path d="M1608 814l4-.5l12 12l-5.500 11.500h-5l-5.500-7z" fill="#0a0af0"/><path d="M1608 815l3-1l8 8l-4 6l-7-7z" fill="#c8c8ff" opacity=".85"/><path d="M1656.500 809l-37 10.500q-6 8 4.500 19z" fill="#10c810"/><path d="M1656.500 809l-36 13l-1 6z" fill="#40f040" opacity=".8"/><path d="M1656.500 809l-30 25l-2.500 4.500z" fill="#0a9a0a" opacity=".7"/><path d="M1619 823l4-1l4 8l-3 5z" fill="#0a0af0"/><path d="M1662.500 798l7 8M1669.500 798l-7 8" stroke="#10d010" stroke-width="1.200"/></svg>
<!-- s_status -->
<div class="a" style="left:0;top:1016px;width:1920px;height:24px;background:linear-gradient(#2e2e2e 0,#454851 1px,#3b3d47 8px,#2e2e2e 8.500px,#353331 24px)"></div><div class="a" style="left:783px;top:1016px;width:1137px;height:24px;background:linear-gradient(#3a3a3a 0,#4a4a4a 1px,#d2d2d2 2px,#c0c1c2 7px,#a0a2a5 13px,#8a9096 24px)"></div><div class="a" style="left:1568px;top:1016px;width:352px;height:24px;background:linear-gradient(#3a3a3a 0,#4a4a4a 1px,#cdcdcd 2px,#b4b5b6 7px,#8f9194 12px,#7b828b 24px)"></div><div class="a" style="left:791px;top:1019px;width:23px;height:19px;background:linear-gradient(#f9c26a,#fbd98e 60%,#fde9a8);border:1px solid #e0ae50"></div><div class="a" style="left:814px;top:1019px;width:23px;height:19px;background:linear-gradient(#dde2e3,#cdd3d5);border:1px solid #d2d7d9"></div><div class="a" style="left:838px;top:1019px;width:23px;height:19px;background:linear-gradient(#dde2e3,#cdd3d5);border:1px solid #d2d7d9"></div><div class="a" style="left:862px;top:1019px;width:23px;height:19px;background:linear-gradient(#dde2e3,#cdd3d5);border:1px solid #d2d7d9"></div><div class="a" style="left:886px;top:1019px;width:115px;height:19px;background:linear-gradient(#f2f2f2,#e6e6e6);border:1px solid #b8b8b8;border-top-color:#9a9a9a"></div><div class="a" style="left:991px;top:1027px;width:0;height:0;border-left:3.500px solid transparent;border-right:3.500px solid transparent;border-top:4px solid #555"></div><div class="a" style="left:1003px;top:1019px;width:2px;height:19px;background:#333"></div><div class="a" style="left:1007px;top:1019px;width:22px;height:19px;background:linear-gradient(#dde2e3,#cdd3d5);border:1px solid #d2d7d9"></div><div class="a" style="left:1029px;top:1019px;width:22px;height:19px;background:linear-gradient(#dde2e3,#cdd3d5);border:1px solid #d2d7d9"></div><div class="a" style="left:1054px;top:1019px;width:135px;height:19px;background:linear-gradient(#f2f2f2,#e6e6e6);border:1px solid #b8b8b8;border-top-color:#9a9a9a"></div><div class="a" style="left:1179px;top:1027px;width:0;height:0;border-left:3.500px solid transparent;border-right:3.500px solid transparent;border-top:4px solid #555"></div><div class="t" style="left:1058px;top:1023px;font-size:12px;letter-spacing:-.3px">1. Загружение 1</div><div class="a" style="left:1194px;top:1019px;width:24px;height:19px;background:linear-gradient(#f9c26a,#fbd98e 60%,#fde9a8);border:1px solid #e0ae50"></div><div class="a" style="left:1218px;top:1019px;width:24px;height:19px;background:linear-gradient(#dde2e3,#cdd3d5);border:1px solid #d2d7d9"></div><div class="a" style="left:1242px;top:1019px;width:24px;height:19px;background:linear-gradient(#dde2e3,#cdd3d5);border:1px solid #d2d7d9"></div><div class="a" style="left:1266px;top:1019px;width:24px;height:19px;background:linear-gradient(#dde2e3,#cdd3d5);border:1px solid #d2d7d9"></div><div class="a" style="left:1290px;top:1019px;width:24px;height:19px;background:linear-gradient(#dde2e3,#cdd3d5);border:1px solid #d2d7d9"></div><div class="a" style="left:1316px;top:1019px;width:53px;height:19px;background:linear-gradient(#f2f2f2,#e6e6e6);border:1px solid #b8b8b8;border-top-color:#9a9a9a"></div><div class="a" style="left:1359px;top:1027px;width:0;height:0;border-left:3.500px solid transparent;border-right:3.500px solid transparent;border-top:4px solid #555"></div><div class="a" style="left:1372px;top:1019px;width:54px;height:19px;background:linear-gradient(#f2f2f2,#e6e6e6);border:1px solid #b8b8b8;border-top-color:#9a9a9a"></div><div class="a" style="left:1416px;top:1027px;width:0;height:0;border-left:3.500px solid transparent;border-right:3.500px solid transparent;border-top:4px solid #555"></div><div class="t" style="left:1376px;top:1023px;font-size:12px;letter-spacing:-.3px"><span style="display:inline-block;width:38px;overflow:hidden">Средни</span></div><div class="a" style="left:1433px;top:1019px;width:24px;height:19px;background:linear-gradient(#dde2e3,#cdd3d5);border:1px solid #d2d7d9"></div><div class="a" style="left:1457px;top:1019px;width:25px;height:19px;background:linear-gradient(#f9c26a,#fbd98e 60%,#fde9a8);border:1px solid #e0ae50"></div><div class="a" style="left:1484px;top:1019px;width:2px;height:19px;background:#333"></div><div class="a" style="left:1489px;top:1019px;width:23px;height:19px;background:linear-gradient(#dde2e3,#cdd3d5);border:1px solid #d2d7d9"></div><div class="a" style="left:1512px;top:1019px;width:54px;height:19px;background:linear-gradient(#f2f2f2,#e6e6e6);border:1px solid #b8b8b8;border-top-color:#9a9a9a"></div><div class="a" style="left:1556px;top:1027px;width:0;height:0;border-left:3.500px solid transparent;border-right:3.500px solid transparent;border-top:4px solid #555"></div><div class="t" style="left:1516px;top:1023px;font-size:12px;letter-spacing:-.3px">1.</div><div class="t" style="left:1575px;top:1023px;font-size:12px;letter-spacing:-.1px">Уз.: 0 / 6</div><div class="a" style="left:1569px;top:1019px;width:1px;height:19px;background:#222"></div><div class="t" style="left:1708px;top:1023px;font-size:12px;letter-spacing:-.1px">Эл.: 0 / 5</div><div class="a" style="left:1702px;top:1019px;width:1px;height:19px;background:#222"></div><div class="t" style="left:1841px;top:1023px;font-size:12px;letter-spacing:-.1px">Загр.: 1 / 1</div><div class="a" style="left:1835px;top:1019px;width:1px;height:19px;background:#222"></div><svg class="sv" style="left:783px;top:1016px" width="800" height="24" viewBox="783 1016 800 24"><path d="M795 1035l2-6l10-9l3 3l-10 10z" fill="#f4c020" stroke="#9a6a10" stroke-width=".700"/><path d="M807 1020l2-2l3 3l-2 2z" fill="#e88"/><path d="M795 1035l1.500-4l3 3z" fill="#333"/><path d="M797 1023q9-3 10 4q0 5-5 7" stroke="#2a8a2a" stroke-width="2.200" fill="none"/><path d="M793 1023l6-4v8z" fill="#2a8a2a"/><path d="M819 1023q9-4 10 4q0 6-8 8" stroke="#9c9c9c" stroke-width="3.800" fill="none"/><path d="M815 1024l7-6v11z" fill="#9c9c9c"/><circle cx="825" cy="1029" r="2.500" fill="none" stroke="#9c9c9c" stroke-width="2"/><path d="M843 1023q9-4 10 4q0 6-8 8" stroke="#9c9c9c" stroke-width="3.800" fill="none"/><path d="M839 1024l7-6v11z" fill="#9c9c9c"/><circle cx="849" cy="1029" r="2.500" fill="none" stroke="#9c9c9c" stroke-width="2"/><path d="M867 1023q9-4 10 4q0 6-8 8" stroke="#9c9c9c" stroke-width="3.800" fill="none"/><path d="M863 1024l7-6v11z" fill="#9c9c9c"/><circle cx="873" cy="1029" r="2.500" fill="none" stroke="#9c9c9c" stroke-width="2"/><path d="M1011 1033l2-5q5-5 10 0l2 5z" fill="#9a9a9a"/><path d="M1033 1024l2 5q5 5 10 0l2-5z" fill="#9a9a9a" transform="translate(0,0)"/><path d="M1199 1026h6l8 5" stroke="#222" stroke-width="1.800" fill="none"/><path d="M1199 1022v8" stroke="#222" stroke-width="1.200"/><path d="M1210 1020v6" stroke="#1d1d8a" stroke-width="1.800"/><path d="M1207.500 1025l2.500 3l2.500-3z" fill="#1d1d8a"/><path d="M1224 1034q-3-6 4-8q6-3 8-4q2 6-3 10" stroke="#9a9a9a" stroke-width="1.800" fill="none"/><path d="M1254 1021v14M1249 1026l10-2M1250 1035l4-4l4 4" stroke="#9a9a9a" stroke-width="1.800" fill="none"/><path d="M1270 1033l2-5q5-5 10 0l2 5z" fill="#9a9a9a"/><path d="M1294 1024l2 5q5 5 10 0l2-5z" fill="#9a9a9a"/><path d="M1438 1031l4 4l9-13" stroke="#a8a8a8" stroke-width="2.200" fill="none"/><text x="1460" y="1030" font-size="10" font-weight="bold" fill="#8a6a20" font-family="Liberation Sans,sans-serif">№</text><path d="M1463 1030l5 5l8-12" stroke="#5a9a20" stroke-width="2.200" fill="none"/><path d="M1493 1036l12-14" stroke="#e8b020" stroke-width="2.500"/><path d="M1499 1020q5-1 9 4" stroke="#666" stroke-width="3" fill="none"/></svg></body></html>
